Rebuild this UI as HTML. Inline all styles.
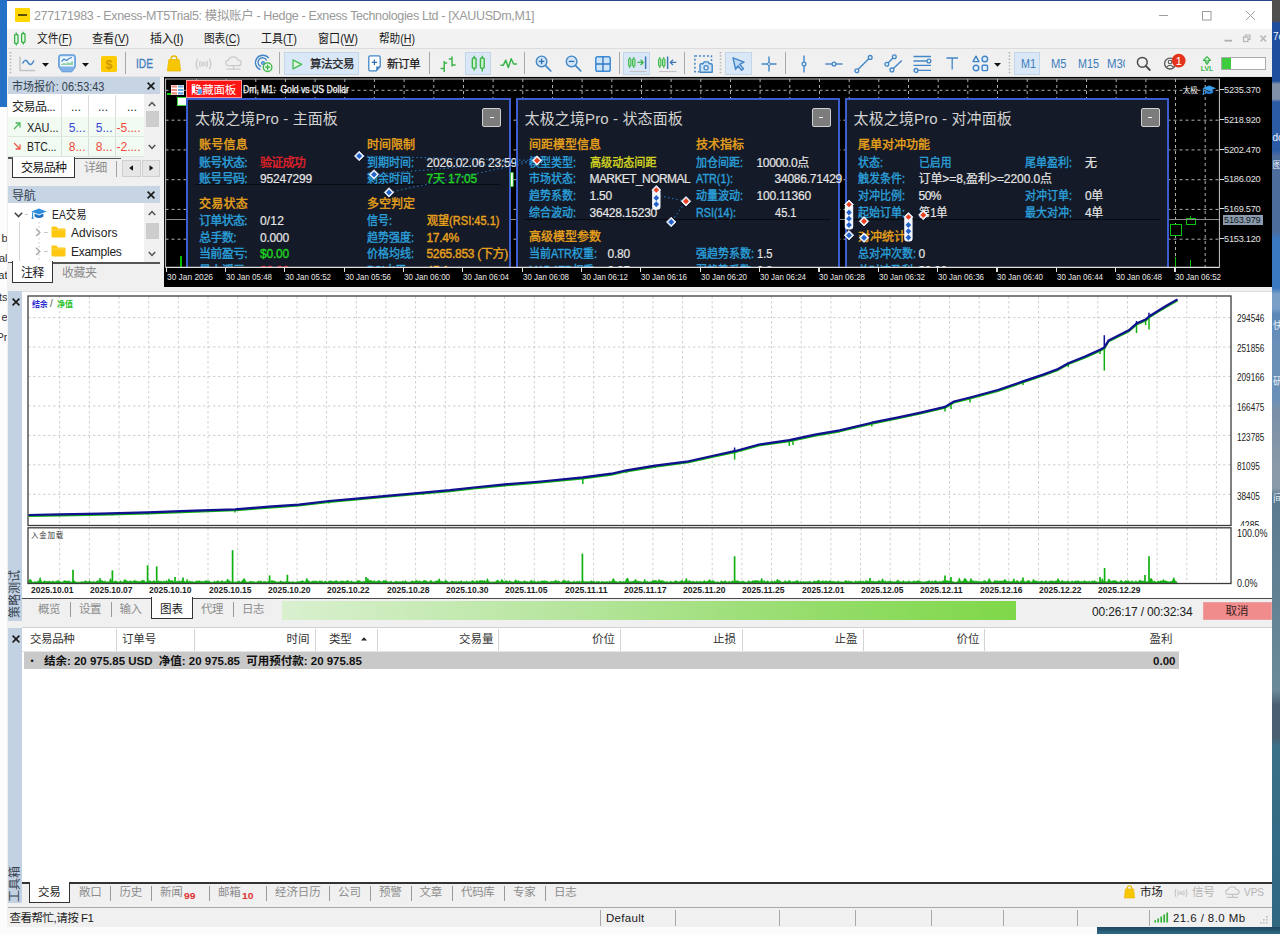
<!DOCTYPE html>
<html lang="zh-CN"><head><meta charset="utf-8"><title>MT5</title><style>
html,body{margin:0;padding:0;}
body{width:1280px;height:934px;position:relative;overflow:hidden;background:#f0f0f0;font-family:"Liberation Sans", "Noto Sans CJK SC", sans-serif;}
.a{position:absolute;}
.t{white-space:pre;}
svg{overflow:visible;display:block;}
</style></head><body>
<div class="a" style="left:0px;top:0px;width:6.7px;height:107px;background:#2470c6;"></div>
<div class="a" style="left:0px;top:107px;width:6.7px;height:827px;background:#fcfcfc;"></div>
<div class="a t" style="right:1272.5px;top:231.4px;font-size:11px;line-height:15px;color:#333;">b</div>
<div class="a t" style="right:1272.5px;top:251.4px;font-size:11px;line-height:15px;color:#333;">al</div>
<div class="a t" style="right:1272.5px;top:268.4px;font-size:11px;line-height:15px;color:#333;">at</div>
<div class="a t" style="right:1272.5px;top:290.4px;font-size:11px;line-height:15px;color:#333;">ts</div>
<div class="a t" style="right:1272.5px;top:310.4px;font-size:11px;line-height:15px;color:#333;">e</div>
<div class="a t" style="right:1272.5px;top:330.4px;font-size:11px;line-height:15px;color:#333;">Pr</div>
<div class="a" style="left:1272px;top:0px;width:8px;height:934px;background:linear-gradient(#4f4f4f 0px,#4f4f4f 21px,#1f4e9e 23px,#1f4e9e 81px,#8090a8 84px,#8090a8 99px,#2b5ba5 102px,#2b5ba5 150px,#4c6c9c 156px,#4c6c9c 232px,#3a78c0 238px,#3a78c0 288px,#7aa0c8 294px,#7aa0c8 308px,#5a88b8 314px,#6a90b8 345px,#6a90b8 398px,#7a90a8 410px,#8a9aa8 470px,#8a9aa8 488px,#5a7a90 496px,#6a8a98 690px,#4a6070 705px,#4a6070 738px,#3a7088 746px,#2f6680 934px);"></div>
<div class="a t" style="left:1273px;top:29.9px;font-size:10px;line-height:14px;color:#f0f4fa;">7c</div>
<div class="a t" style="left:1272.5px;top:130.9px;font-size:10px;line-height:14px;color:#f0f4fa;">dc</div>
<div class="a t" style="left:1272.5px;top:159.4px;font-size:9px;line-height:13px;color:#e8eef6;">图</div>
<div class="a t" style="left:1273px;top:318.9px;font-size:10px;line-height:14px;color:#e8eef6;">快</div>
<div class="a t" style="left:1273px;top:374.9px;font-size:10px;line-height:14px;color:#e8eef6;">研</div>
<div class="a t" style="left:1273px;top:491.9px;font-size:10px;line-height:14px;color:#e8eef6;">间</div>
<div class="a" style="left:0px;top:927px;width:1097px;height:7px;background:#fbfbfb;"></div>
<div class="a" style="left:1097px;top:927px;width:183px;height:7px;background:linear-gradient(#1e4660,#2f6a86);"></div>
<div class="a" style="left:6.7px;top:0px;width:1265.6px;height:1.6px;background:#274a86;"></div>
<div class="a" style="left:6.7px;top:1.4px;width:1265.6px;height:925.8px;background:#f0f0f0;"></div>
<div class="a" style="left:6.7px;top:1.4px;width:1265.6px;height:28px;background:#ffffff;"></div>
<div class="a" style="left:14.8px;top:7.5px;width:15px;height:14.8px;background:#ffd600;border-radius:1px;"></div>
<div class="a" style="left:17.8px;top:14.4px;width:9.6px;height:1.3px;background:#5e5200;"></div>
<div class="a t" style="left:34px;top:8.2px;font-size:12.5px;line-height:16.5px;color:#9a9a9a;letter-spacing:-0.36px;">277171983 - Exness-MT5Trial5: 模拟账户 - Hedge - Exness Technologies Ltd - [XAUUSDm,M1]</div>
<svg class="a" style="left:1155px;top:8px;" width="110" height="16" viewBox="0 0 110 16"><path d="M4 7.5H13" stroke="#a0a0a0" stroke-width="1"/><rect x="47.5" y="3.5" width="8.5" height="8.5" fill="none" stroke="#9a9a9a" stroke-width="1"/><path d="M91 3L100 12M100 3L91 12" stroke="#a0a0a0" stroke-width="1" fill="none"/></svg>
<div class="a" style="left:6.7px;top:29.4px;width:1265.6px;height:19.6px;background:#f2f2f2;"></div>
<div class="a" style="left:8px;top:48px;width:1264px;height:1px;background:#dcdcdc;"></div>
<svg class="a" style="left:13px;top:31px;" width="14" height="16" viewBox="0 0 14 16"><g fill="#e6f7e6" stroke="#37b24a" stroke-width="1.3"><rect x="1.6" y="3.5" width="3.4" height="9" rx="1"/><rect x="8.6" y="2.5" width="3.4" height="9" rx="1"/></g><path d="M3.3 1.5V3.5M3.3 12.5V14.5M10.3 0.8V2.5M10.3 11.5V13.5" stroke="#37b24a" stroke-width="1.2"/></svg>
<div class="a t" style="left:37px;top:31.4px;font-size:12px;line-height:16px;color:#1a1a1a;transform:scaleX(0.890);transform-origin:left center;">文件(F)</div>
<div class="a" style="left:60.8px;top:45px;width:7px;height:1px;background:#444;"></div>
<div class="a t" style="left:92px;top:31.4px;font-size:12px;line-height:16px;color:#1a1a1a;transform:scaleX(0.925);transform-origin:left center;">查看(V)</div>
<div class="a" style="left:116.3px;top:45px;width:8.5px;height:1px;background:#444;"></div>
<div class="a t" style="left:150px;top:31.4px;font-size:12px;line-height:16px;color:#1a1a1a;letter-spacing:-0.47px;">插入(I)</div>
<div class="a" style="left:175.8px;top:45px;width:3px;height:1px;background:#444;"></div>
<div class="a t" style="left:204px;top:31.4px;font-size:12px;line-height:16px;color:#1a1a1a;transform:scaleX(0.885);transform-origin:left center;">图表(C)</div>
<div class="a" style="left:227.3px;top:45px;width:8.5px;height:1px;background:#444;"></div>
<div class="a t" style="left:261px;top:31.4px;font-size:12px;line-height:16px;color:#1a1a1a;transform:scaleX(0.915);transform-origin:left center;">工具(T)</div>
<div class="a" style="left:285.8px;top:45px;width:7px;height:1px;background:#444;"></div>
<div class="a t" style="left:318px;top:31.4px;font-size:12px;line-height:16px;color:#1a1a1a;transform:scaleX(0.923);transform-origin:left center;">窗口(W)</div>
<div class="a" style="left:345.3px;top:45px;width:8.5px;height:1px;background:#444;"></div>
<div class="a t" style="left:379px;top:31.4px;font-size:12px;line-height:16px;color:#1a1a1a;transform:scaleX(0.885);transform-origin:left center;">帮助(H)</div>
<div class="a" style="left:402.3px;top:45px;width:8.5px;height:1px;background:#444;"></div>
<svg class="a" style="left:1220px;top:32px;" width="50" height="14" viewBox="0 0 50 14"><path d="M4.5 8.7H12" stroke="#b0b0b0" stroke-width="1.8"/><g fill="none" stroke="#b4b4b4" stroke-width="1.2"><rect x="23.5" y="5" width="4.5" height="4.5"/><path d="M25.5 5V3H30V7.5H28"/></g><path d="M40.5 3.5L46 9.5M46 3.5L40.5 9.5" stroke="#b8b8b8" stroke-width="1.6"/></svg>
<div class="a" style="left:8px;top:49px;width:1264px;height:28px;background:#f0f0f0;"></div>
<div class="a" style="left:8px;top:76px;width:1264px;height:1px;background:#e2e2e2;"></div>
<svg class="a" style="left:9px;top:51px;" width="3" height="24" viewBox="0 0 3 24"><path d="M1.5 1V24" stroke="#b4b4b4" stroke-width="1.6" stroke-dasharray="1.4 1.9"/></svg>
<svg class="a" style="left:19px;top:56px;" width="17" height="16" viewBox="0 0 17 16"><path d="M1 0.5V14.5H16" fill="none" stroke="#c2c2c2" stroke-width="1.4"/><path d="M3.5 7.5C5.5 3.5 7 3.5 9 6.5S12.5 9.5 15 4.5" fill="none" stroke="#4286c6" stroke-width="1.5"/></svg>
<svg class="a" style="left:41.5px;top:63px;" width="7" height="4" viewBox="0 0 7 4"><path d="M0 0H7L3.5 3.8Z" fill="#111"/></svg>
<svg class="a" style="left:58px;top:54px;" width="18" height="19" viewBox="0 0 18 19"><path d="M2.5 0.8H15.5Q17.3 0.8 17.3 2.6V13L13.8 17.8H4.2L0.7 13V2.6Q0.7 0.8 2.5 0.8Z" fill="#7fb2e6" stroke="#5c98d6" stroke-width="1"/><rect x="2" y="2.2" width="14" height="10.2" rx="1" fill="#eef7ff"/><path d="M3.5 7.5L6 5L8.5 6.5L11 4.5L14 3.5" fill="none" stroke="#4286c6" stroke-width="1.1"/><path d="M4 11V9.8M6 11V9M8 11V9.5M10 11V8.5M12 11V9M14 11V7.5" stroke="#45b455" stroke-width="1.1"/></svg>
<svg class="a" style="left:81.5px;top:63px;" width="7" height="4" viewBox="0 0 7 4"><path d="M0 0H7L3.5 3.8Z" fill="#111"/></svg>
<svg class="a" style="left:101px;top:55.5px;" width="16" height="16" viewBox="0 0 16 16"><rect x="0" y="0" width="16" height="16" rx="1.8" fill="#ffcb05"/><text x="8" y="12.6" text-anchor="middle" font-size="12.5" font-weight="700" fill="#cf9800" font-family='"Liberation Sans",sans-serif'>$</text></svg>
<div class="a" style="left:125px;top:52px;width:1px;height:22px;background:#a8a8a8;"></div>
<div class="a t" style="left:135.5px;top:56.2px;font-size:12.5px;line-height:16.5px;color:#3f7fc0;-webkit-text-stroke:0.3px #3f7fc0;transform:scaleX(0.816);transform-origin:left center;">IDE</div>
<svg class="a" style="left:167px;top:55px;" width="14" height="17" viewBox="0 0 14 17"><path d="M4.2 5V3.2Q4.2 1 7 1T9.8 3.2V5" fill="none" stroke="#e8b800" stroke-width="1.3"/><path d="M1.8 4.6H12.2L13.6 16H0.4Z" fill="#f7c600" stroke="#eab900" stroke-width="0.8" stroke-linejoin="round"/></svg>
<svg class="a" style="left:195px;top:57.5px;" width="17" height="12" viewBox="0 0 17 12"><g fill="none" stroke="#cacaca" stroke-width="1.3"><circle cx="8.5" cy="6" r="1.7"/><path d="M5.3 2.8Q3.8 6 5.3 9.2M11.7 2.8Q13.2 6 11.7 9.2M2.6 0.8Q-0.2 6 2.6 11.2M14.4 0.8Q17.2 6 14.4 11.2"/></g></svg>
<svg class="a" style="left:224.5px;top:56px;" width="17" height="15" viewBox="0 0 17 15"><g fill="none" stroke="#cacaca" stroke-width="1.3"><path d="M4.2 9.6Q0.8 9.6 0.8 6.8Q0.8 4.3 3.6 4.1Q4.5 0.8 8.3 0.8Q11.8 0.8 12.7 3.9Q16.2 4 16.2 6.9Q16.2 9.6 13 9.6Z"/><path d="M8.5 9.6V13M1.5 13.2H15.5"/></g></svg>
<svg class="a" style="left:254.5px;top:55px;" width="18" height="17" viewBox="0 0 18 17"><g fill="none" stroke="#4286c6" stroke-width="1.35"><path d="M13.8 3.2A7.4 7.4 0 1 0 5.4 14.6"/><path d="M11.7 5.6A4.5 4.5 0 1 0 6.2 11.6"/></g><circle cx="8" cy="8" r="1.7" fill="#6aa8e0" stroke="#4286c6" stroke-width="0.8"/><circle cx="12.6" cy="12.2" r="4.3" fill="#dff5df" stroke="#3cb44a" stroke-width="1.3"/><path d="M12.6 9.7V14.7M10.1 12.2H15.1" stroke="#3cb44a" stroke-width="1.3"/></svg>
<div class="a" style="left:279px;top:52px;width:1px;height:22px;background:#a8a8a8;"></div>
<div class="a" style="left:283.5px;top:51.5px;width:75.5px;height:23.5px;background:#d9e7f6;box-shadow:inset 0 0 0 1px #c3d5e8;"></div>
<svg class="a" style="left:291.5px;top:58.5px;" width="11" height="11" viewBox="0 0 11 11"><path d="M1 0.8L9.6 5.3L1 9.8Z" fill="#dff7df" stroke="#45bd52" stroke-width="1.3" stroke-linejoin="round"/></svg>
<div class="a t" style="left:310px;top:56.8px;font-size:11.5px;line-height:15.5px;color:#1a1a1a;-webkit-text-stroke:0.25px #1a1a1a;letter-spacing:-0.50px;">算法交易</div>
<svg class="a" style="left:368px;top:55px;" width="13" height="17" viewBox="0 0 13 17"><path d="M2.3 0.8H10.7Q12.2 0.8 12.2 2.3V11.5L8.2 15.8H2.3Q0.8 15.8 0.8 14.3V2.3Q0.8 0.8 2.3 0.8Z" fill="#fff" stroke="#4286c6" stroke-width="1.3"/><path d="M12.2 11.5H8.2V15.8Z" fill="#4286c6"/><path d="M6.4 4.6V10M3.7 7.3H9.1" stroke="#2c6cb0" stroke-width="1.2"/></svg>
<div class="a t" style="left:387px;top:56.8px;font-size:11.5px;line-height:15.5px;color:#1a1a1a;-webkit-text-stroke:0.25px #1a1a1a;letter-spacing:-0.50px;">新订单</div>
<div class="a" style="left:429px;top:52px;width:1px;height:22px;background:#a8a8a8;"></div>
<svg class="a" style="left:440px;top:55.5px;" width="17" height="16" viewBox="0 0 17 16"><path d="M4.2 5V16M0.6 12.5H4.2M4.2 7H7.2M12 0.5V10.5M8.8 3H12M12 9H15.6" fill="none" stroke="#3cb44a" stroke-width="1.5"/></svg>
<div class="a" style="left:464.5px;top:51.5px;width:26.0px;height:23.5px;background:#d9e7f6;box-shadow:inset 0 0 0 1px #c3d5e8;"></div>
<svg class="a" style="left:471px;top:55px;" width="15" height="17" viewBox="0 0 15 17"><g fill="#c9f2c9" stroke="#3cb44a" stroke-width="1.4"><rect x="1.3" y="3" width="3.8" height="10.2" rx="1.3"/><rect x="9.4" y="3" width="3.8" height="10.2" rx="1.3"/></g><path d="M3.2 0.8V3M3.2 13.2V15.6M11.3 0.8V3M11.3 13.2V16.4" stroke="#3cb44a" stroke-width="1.4"/></svg>
<svg class="a" style="left:499.5px;top:58px;" width="18" height="12" viewBox="0 0 18 12"><path d="M0.5 7.2H3.3L5.8 2.2L8.3 9.6L11.2 0.8L13.6 6H17" fill="none" stroke="#3cb44a" stroke-width="1.5" stroke-linejoin="round"/></svg>
<div class="a" style="left:524px;top:52px;width:1px;height:22px;background:#a8a8a8;"></div>
<svg class="a" style="left:534.7px;top:54.7px;" width="17" height="17" viewBox="0 0 17 17"><circle cx="6.6" cy="6.4" r="5.3" fill="#d2e5f7" stroke="#4286c6" stroke-width="1.4"/><path d="M10.6 10.6L15.8 16" stroke="#4286c6" stroke-width="1.7" stroke-linecap="round"/><path d="M3.8 6.4H9.4" stroke="#2c6cb0" stroke-width="1.3"/><path d="M6.6 3.6V9.2" stroke="#2c6cb0" stroke-width="1.3"/></svg>
<svg class="a" style="left:564.7px;top:54.7px;" width="17" height="17" viewBox="0 0 17 17"><circle cx="6.6" cy="6.4" r="5.3" fill="#d2e5f7" stroke="#4286c6" stroke-width="1.4"/><path d="M10.6 10.6L15.8 16" stroke="#4286c6" stroke-width="1.7" stroke-linecap="round"/><path d="M3.8 6.4H9.4" stroke="#2c6cb0" stroke-width="1.3"/></svg>
<svg class="a" style="left:594.5px;top:55.5px;" width="16" height="16" viewBox="0 0 16 16"><rect x="0.8" y="0.8" width="14.4" height="14.4" rx="1.8" fill="#cfe4f8" stroke="#3b8ad6" stroke-width="1.5"/><path d="M8 1V15M1 8H15" stroke="#2f78c4" stroke-width="1.4"/></svg>
<div class="a" style="left:619px;top:52px;width:1px;height:22px;background:#a8a8a8;"></div>
<div class="a" style="left:623px;top:51.5px;width:27px;height:23.5px;background:#d9e7f6;box-shadow:inset 0 0 0 1px #c3d5e8;"></div>
<svg class="a" style="left:628px;top:55.5px;" width="20" height="17" viewBox="0 0 20 17"><g fill="#bff0bf" stroke="#3cb44a" stroke-width="1.1"><rect x="0.6" y="2.8" width="2.3" height="7.2" rx="1"/><rect x="4.6" y="2.8" width="2.3" height="7.2" rx="1"/></g><path d="M1.75 1V2.8M1.75 10V12M5.75 1V2.8M5.75 10V12" stroke="#3cb44a" stroke-width="1.1"/><path d="M9.4 6.4H15M12.6 3.8L15.2 6.4L12.6 9" fill="none" stroke="#3cb44a" stroke-width="1.3"/><path d="M17.6 0.5V13" stroke="#3f78b4" stroke-width="1.5"/><path d="M1.5 15.6H18.5" stroke="#bdbdbd" stroke-width="1"/></svg>
<svg class="a" style="left:657.5px;top:55.5px;" width="20" height="17" viewBox="0 0 20 17"><g fill="#bff0bf" stroke="#3cb44a" stroke-width="1.1"><rect x="0.6" y="2.8" width="2.3" height="7.2" rx="1"/><rect x="4.6" y="2.8" width="2.3" height="7.2" rx="1"/></g><path d="M1.75 1V2.8M1.75 10V12M5.75 1V2.8M5.75 10V12" stroke="#3cb44a" stroke-width="1.1"/><path d="M9.6 0.5V13" stroke="#3f78b4" stroke-width="1.5"/><path d="M12.6 6.4H18.4M15 3.8L12.4 6.4L15 9" fill="none" stroke="#3f78b4" stroke-width="1.3"/><path d="M1 15.6H18.5" stroke="#bdbdbd" stroke-width="1"/></svg>
<div class="a" style="left:683.5px;top:52px;width:1px;height:22px;background:#a8a8a8;"></div>
<svg class="a" style="left:693.5px;top:54.5px;" width="19" height="18" viewBox="0 0 19 18"><rect x="0.9" y="0.9" width="16.6" height="15.8" fill="none" stroke="#4286c6" stroke-width="1.5" stroke-dasharray="2 2"/><rect x="5" y="6" width="14" height="12" fill="#f0f0f0"/><path d="M6 17.2V10Q6 8.8 7.2 8.8H9L10.2 6.9H14.2L15.4 8.8H17Q18.2 8.8 18.2 10V17.2Z" fill="#cfe4f8" stroke="#4286c6" stroke-width="1.4" stroke-linejoin="round"/><circle cx="12.1" cy="12.8" r="2.1" fill="#f0f0f0" stroke="#4286c6" stroke-width="1.2"/></svg>
<svg class="a" style="left:719px;top:51px;" width="3" height="24" viewBox="0 0 3 24"><path d="M1.5 1V24" stroke="#b4b4b4" stroke-width="1.6" stroke-dasharray="1.4 1.9"/></svg>
<div class="a" style="left:724.5px;top:51.5px;width:27.0px;height:23.5px;background:#d9e7f6;box-shadow:inset 0 0 0 1px #c3d5e8;"></div>
<svg class="a" style="left:732px;top:57px;" width="14" height="14" viewBox="0 0 14 14"><path d="M1 0.9L12 5.2L7.6 7.3L11.5 11.6L9.6 13.2L5.9 8.9L3.6 12.4Z" fill="#bcd9f5" stroke="#4286c6" stroke-width="1.4" stroke-linejoin="round"/></svg>
<svg class="a" style="left:760.5px;top:55.5px;" width="16" height="16" viewBox="0 0 16 16"><path d="M8 0.5V15.5M0.5 8H15.5" stroke="#4286c6" stroke-width="1.4"/><circle cx="8" cy="8" r="1.5" fill="#f0f0f0" stroke="#4286c6" stroke-width="1"/></svg>
<div class="a" style="left:785px;top:52px;width:1px;height:22px;background:#a8a8a8;"></div>
<svg class="a" style="left:799.5px;top:54.5px;" width="8" height="18" viewBox="0 0 8 18"><path d="M4 0.5V17.5" stroke="#4286c6" stroke-width="1.4"/><circle cx="4" cy="9" r="1.9" fill="#e4f0fb" stroke="#4286c6" stroke-width="1.3"/></svg>
<svg class="a" style="left:824.5px;top:59.5px;" width="18" height="8" viewBox="0 0 18 8"><path d="M0.3 4H17.6" stroke="#4286c6" stroke-width="1.4"/><circle cx="9" cy="4" r="1.9" fill="#e4f0fb" stroke="#4286c6" stroke-width="1.3"/></svg>
<svg class="a" style="left:853.5px;top:54.5px;" width="19" height="18" viewBox="0 0 19 18"><path d="M3 15.6L16 2.6" stroke="#4286c6" stroke-width="1.4"/><circle cx="2.8" cy="15.7" r="1.9" fill="#e4f0fb" stroke="#4286c6" stroke-width="1.3"/><circle cx="16.2" cy="2.4" r="1.9" fill="#e4f0fb" stroke="#4286c6" stroke-width="1.3"/></svg>
<svg class="a" style="left:883.5px;top:54px;" width="19" height="19" viewBox="0 0 19 19"><path d="M2.8 10.2L10.2 2.8M7.8 16L17.8 6.4" stroke="#4286c6" stroke-width="1.4"/><g fill="#e4f0fb" stroke="#4286c6" stroke-width="1.3"><circle cx="2.8" cy="10.2" r="1.9"/><circle cx="10.3" cy="2.7" r="1.9"/><circle cx="7.9" cy="15.9" r="1.9"/></g></svg>
<svg class="a" style="left:913px;top:54.5px;" width="19" height="18" viewBox="0 0 19 18"><path d="M0.5 1.5H18M0.5 6H14M0.5 10.4H18M5 15.4H18" stroke="#4286c6" stroke-width="1.4"/><g fill="#e4f0fb" stroke="#4286c6" stroke-width="1.3"><circle cx="15.9" cy="6" r="1.9"/><circle cx="3" cy="15.4" r="1.9"/></g></svg>
<svg class="a" style="left:946px;top:57px;" width="13" height="13" viewBox="0 0 13 13"><path d="M0.5 1H12M6.2 1V12.4" stroke="#4286c6" stroke-width="1.3" fill="none"/></svg>
<svg class="a" style="left:972px;top:55px;" width="17" height="17" viewBox="0 0 17 17"><g fill="#e4f0fb" stroke="#4286c6" stroke-width="1.4"><path d="M4 1.2L7 6.6H1Z" stroke-linejoin="round"/><circle cx="12.8" cy="4" r="2.8"/><circle cx="4" cy="13" r="2.8"/><rect x="10.2" y="10.3" width="5.3" height="5.3" rx="0.8"/></g></svg>
<svg class="a" style="left:994px;top:63px;" width="7" height="4" viewBox="0 0 7 4"><path d="M0 0H7L3.5 3.8Z" fill="#111"/></svg>
<svg class="a" style="left:1008px;top:51px;" width="3" height="24" viewBox="0 0 3 24"><path d="M1.5 1V24" stroke="#b4b4b4" stroke-width="1.6" stroke-dasharray="1.4 1.9"/></svg>
<div class="a" style="left:1014px;top:51.5px;width:26px;height:23.5px;background:#d9e7f6;box-shadow:inset 0 0 0 1px #c3d5e8;"></div>
<div class="a t" style="left:1020.5px;top:56.2px;font-size:12.5px;line-height:16.5px;color:#3a7cbc;transform:scaleX(0.863);transform-origin:left center;">M1</div>
<div class="a t" style="left:1050.5px;top:56.2px;font-size:12.5px;line-height:16.5px;color:#3a7cbc;transform:scaleX(0.892);transform-origin:left center;">M5</div>
<div class="a t" style="left:1077.5px;top:56.2px;font-size:12.5px;line-height:16.5px;color:#3a7cbc;transform:scaleX(0.863);transform-origin:left center;">M15</div>
<div class="a" style="left:1106px;top:55px;width:18.8px;height:18px;overflow:hidden;">
<div class="a t" style="left:0.8px;top:1.2px;font-size:12.5px;line-height:16.5px;color:#3a7cbc;transform:scaleX(0.913);transform-origin:left center;">M30</div>
</div>
<svg class="a" style="left:1135.5px;top:56px;" width="15" height="15" viewBox="0 0 15 15"><circle cx="6.3" cy="6.3" r="4.9" fill="none" stroke="#4a4a4a" stroke-width="1.5"/><path d="M9.9 10L13.8 14" stroke="#4a4a4a" stroke-width="1.8" stroke-linecap="round"/></svg>
<svg class="a" style="left:1163px;top:53px;" width="24" height="18" viewBox="0 0 24 18"><circle cx="7" cy="10.6" r="5.4" fill="none" stroke="#555" stroke-width="1.3"/><circle cx="7" cy="9" r="1.8" fill="none" stroke="#555" stroke-width="1.1"/><path d="M3.6 14.2Q7 10.4 10.4 14.2" fill="none" stroke="#555" stroke-width="1.1"/><circle cx="15.7" cy="7.6" r="6.9" fill="#e5341d"/><text x="15.7" y="11.6" text-anchor="middle" font-size="11" fill="#fff" font-family='"Liberation Sans",sans-serif'>1</text></svg>
<svg class="a" style="left:1199.5px;top:55.5px;" width="14" height="16" viewBox="0 0 14 16"><path d="M7 0.6L10.6 4.4H8.4Q9.4 6.8 7 7.6Q4.6 6.8 5.6 4.4H3.4Z" fill="#d8f3d8" stroke="#3cb44a" stroke-width="1.1" stroke-linejoin="round"/><path d="M7 4V9" stroke="#3cb44a" stroke-width="1.1"/><text x="7" y="15.2" text-anchor="middle" font-size="6.8" font-weight="700" fill="#3cb44a" font-family='"Liberation Sans",sans-serif'>LVL</text></svg>
<div class="a" style="left:1220.5px;top:57.3px;width:45.5px;height:13.2px;background:#ffffff;box-sizing:border-box;border:1.5px solid #ababab;"></div>
<div class="a" style="left:1221.6px;top:58.4px;width:9.2px;height:11px;background:#3ccc3c;"></div>
<div class="a" style="left:8px;top:77px;width:152px;height:16.5px;background:#c6d4e4;"></div>
<div class="a t" style="left:12px;top:78.5px;font-size:12px;line-height:16px;color:#33414f;transform:scaleX(0.912);transform-origin:left center;">市场报价: 06:53:43</div>
<svg class="a" style="left:147px;top:81.8px;" width="8" height="8" viewBox="0 0 8 8"><path d="M0.6 0.6L7.4 7.4M7.4 0.6L0.6 7.4" stroke="#1a1a1a" stroke-width="1.6"/></svg>
<div class="a" style="left:8px;top:94px;width:136px;height:62px;background:#ffffff;"></div>
<div class="a" style="left:8px;top:116.5px;width:136px;height:39.5px;background:#f1fbf1;"></div>
<div class="a" style="left:61px;top:95px;width:1px;height:61px;background:#dcdcdc;"></div>
<div class="a" style="left:88.3px;top:95px;width:1px;height:61px;background:#dcdcdc;"></div>
<div class="a" style="left:115.2px;top:95px;width:1px;height:61px;background:#dcdcdc;"></div>
<div class="a" style="left:8px;top:136px;width:136px;height:1px;background:#dfe6df;"></div>
<div class="a" style="left:8px;top:155.6px;width:136px;height:1px;background:#dfe6df;"></div>
<div class="a t" style="left:12px;top:99.4px;font-size:12px;line-height:16px;color:#222;letter-spacing:-0.50px;">交易品...</div>
<div class="a t" style="right:1199px;top:99.4px;font-size:12px;line-height:16px;color:#333;">...</div>
<div class="a t" style="right:1172px;top:99.4px;font-size:12px;line-height:16px;color:#333;">...</div>
<div class="a t" style="right:1143px;top:99.4px;font-size:12px;line-height:16px;color:#333;">...</div>
<svg class="a" style="left:12.5px;top:122px;" width="8" height="8" viewBox="0 0 8 8"><path d="M1 7L7 1M2.6 1H7V5.4" fill="none" stroke="#4cb85c" stroke-width="1.3"/></svg>
<svg class="a" style="left:12.5px;top:141.5px;" width="8" height="8" viewBox="0 0 8 8"><path d="M1 1L7 7M2.6 7H7V2.6" fill="none" stroke="#ee5a4a" stroke-width="1.3"/></svg>
<div class="a t" style="left:27px;top:119.7px;font-size:12px;line-height:16px;color:#222;transform:scaleX(0.908);transform-origin:left center;">XAU...</div>
<div class="a t" style="left:27px;top:139.2px;font-size:12px;line-height:16px;color:#222;transform:scaleX(0.867);transform-origin:left center;">BTC...</div>
<div class="a t" style="right:1194.5px;top:119.7px;font-size:12px;line-height:16px;color:#3848d8;">5...</div>
<div class="a t" style="right:1167.5px;top:119.7px;font-size:12px;line-height:16px;color:#3848d8;">5...</div>
<div class="a t" style="right:1139.5px;top:119.7px;font-size:12px;line-height:16px;color:#f0483c;">-5....</div>
<div class="a t" style="right:1194.5px;top:139.2px;font-size:12px;line-height:16px;color:#f0483c;">8...</div>
<div class="a t" style="right:1167.5px;top:139.2px;font-size:12px;line-height:16px;color:#f0483c;">8...</div>
<div class="a t" style="right:1139.5px;top:139.2px;font-size:12px;line-height:16px;color:#f0483c;">-2....</div>
<div class="a" style="left:144px;top:94px;width:16px;height:62px;background:#f0f0f0;"></div>
<svg class="a" style="left:148px;top:100.5px;" width="8" height="6" viewBox="0 0 8 6"><path d="M0.8 5L4 1.6L7.2 5" fill="none" stroke="#505050" stroke-width="1.5"/></svg>
<svg class="a" style="left:148px;top:144px;" width="8" height="6" viewBox="0 0 8 6"><path d="M0.8 1L4 4.4L7.2 1" fill="none" stroke="#505050" stroke-width="1.5"/></svg>
<div class="a" style="left:146px;top:111px;width:13px;height:15.5px;background:#cdcdcd;"></div>
<div class="a" style="left:74.5px;top:158px;width:46.5px;height:1.4px;background:#555;"></div>
<div class="a" style="left:12px;top:156.5px;width:62.5px;height:21px;background:#ffffff;box-sizing:border-box;border-left:1.4px solid #333;border-right:1.8px solid #333;border-bottom:1.8px solid #333;"></div>
<div class="a t" style="left:21px;top:159.6px;font-size:12px;line-height:16px;color:#1a1a1a;letter-spacing:-0.63px;">交易品种</div>
<div class="a t" style="left:84px;top:159.6px;font-size:12px;line-height:16px;color:#8c8c8c;letter-spacing:-0.76px;">详细</div>
<div class="a" style="left:8px;top:157.3px;width:5px;height:1.4px;background:#555;"></div>
<div class="a" style="left:116px;top:161px;width:1px;height:16px;background:#a0a0a0;"></div>
<div class="a" style="left:122px;top:159.5px;width:18.5px;height:17.5px;background:#e6e6e6;box-sizing:border-box;border:1px solid #cfcfcf;"></div>
<svg class="a" style="left:127.2px;top:164.3px;" width="8" height="8" viewBox="0 0 8 8"><path d="M6 1.2L2.2 4L6 6.8Z" fill="#111"/></svg>
<div class="a" style="left:141.5px;top:159.5px;width:18.5px;height:17.5px;background:#e6e6e6;box-sizing:border-box;border:1px solid #cfcfcf;"></div>
<svg class="a" style="left:146.7px;top:164.3px;" width="8" height="8" viewBox="0 0 8 8"><path d="M2.5 1.2L6.3 4L2.5 6.8Z" fill="#111"/></svg>
<div class="a" style="left:8px;top:186.3px;width:152px;height:16.5px;background:#c6d4e4;"></div>
<div class="a t" style="left:12px;top:187.7px;font-size:12px;line-height:16px;color:#33414f;letter-spacing:-0.26px;">导航</div>
<svg class="a" style="left:147px;top:191px;" width="8" height="8" viewBox="0 0 8 8"><path d="M0.6 0.6L7.4 7.4M7.4 0.6L0.6 7.4" stroke="#1a1a1a" stroke-width="1.6"/></svg>
<div class="a" style="left:8px;top:203px;width:136px;height:59.5px;background:#ffffff;"></div>
<div class="a" style="left:144px;top:203px;width:16px;height:59.5px;background:#f0f0f0;"></div>
<svg class="a" style="left:148px;top:209.5px;" width="8" height="6" viewBox="0 0 8 6"><path d="M0.8 5L4 1.6L7.2 5" fill="none" stroke="#505050" stroke-width="1.5"/></svg>
<svg class="a" style="left:148px;top:250.5px;" width="8" height="6" viewBox="0 0 8 6"><path d="M0.8 1L4 4.4L7.2 1" fill="none" stroke="#505050" stroke-width="1.5"/></svg>
<div class="a" style="left:146px;top:223px;width:13px;height:15.5px;background:#cdcdcd;"></div>
<div class="a" style="left:18.5px;top:222px;width:1px;height:40px;background:#d4d4d4;"></div>
<svg class="a" style="left:38px;top:222px;" width="2" height="40" viewBox="0 0 2 40"><path d="M1 0V40" stroke="#c8c8c8" stroke-width="1" stroke-dasharray="1.5 2.5"/></svg>
<svg class="a" style="left:14px;top:211.5px;" width="9" height="6" viewBox="0 0 9 6"><path d="M0.8 0.8L4.5 4.6L8.2 0.8" fill="none" stroke="#444" stroke-width="1.5"/></svg>
<div class="a" style="left:24.5px;top:213.5px;width:3px;height:1px;background:#c8c8c8;"></div>
<svg class="a" style="left:31px;top:208px;" width="16.0" height="12.0" viewBox="0 0 16 12"><path d="M8 0.6L15.6 3.6L8 6.6L0.4 3.6Z" fill="#2e8fdc"/><path d="M3.6 5.6V8.6Q8 11.6 12.4 8.6V5.6L8 7.4Z" fill="#1d6fc0"/><path d="M1.6 4.2V9.4" stroke="#2e8fdc" stroke-width="1.1"/><circle cx="1.6" cy="10" r="1.1" fill="#2e8fdc"/></svg>
<div class="a t" style="left:52px;top:206.7px;font-size:12px;line-height:16px;color:#222;transform:scaleX(0.862);transform-origin:left center;">EA交易</div>
<svg class="a" style="left:34.5px;top:228.3px;" width="6" height="9" viewBox="0 0 6 9"><path d="M1 0.8L4.8 4.4L1 8" fill="none" stroke="#a8a8a8" stroke-width="1.4"/></svg>
<div class="a" style="left:44px;top:232.0px;width:3.5px;height:1px;background:#c8c8c8;"></div>
<svg class="a" style="left:51px;top:226.3px;" width="15" height="12" viewBox="0 0 15 12"><path d="M0.5 1.6Q0.5 0.6 1.5 0.6H5.4L7 2.4H13.5Q14.5 2.4 14.5 3.4V10.6Q14.5 11.6 13.5 11.6H1.5Q0.5 11.6 0.5 10.6Z" fill="#ffc810"/><path d="M0.5 3.6H14.5V4.4H0.5Z" fill="#ffdb5c"/></svg>
<div class="a t" style="left:71px;top:225.4px;font-size:12px;line-height:16px;color:#222;letter-spacing:0.06px;">Advisors</div>
<svg class="a" style="left:34.5px;top:246.8px;" width="6" height="9" viewBox="0 0 6 9"><path d="M1 0.8L4.8 4.4L1 8" fill="none" stroke="#a8a8a8" stroke-width="1.4"/></svg>
<div class="a" style="left:44px;top:250.5px;width:3.5px;height:1px;background:#c8c8c8;"></div>
<svg class="a" style="left:51px;top:244.8px;" width="15" height="12" viewBox="0 0 15 12"><path d="M0.5 1.6Q0.5 0.6 1.5 0.6H5.4L7 2.4H13.5Q14.5 2.4 14.5 3.4V10.6Q14.5 11.6 13.5 11.6H1.5Q0.5 11.6 0.5 10.6Z" fill="#ffc810"/><path d="M0.5 3.6H14.5V4.4H0.5Z" fill="#ffdb5c"/></svg>
<div class="a t" style="left:71px;top:243.9px;font-size:12px;line-height:16px;color:#222;letter-spacing:-0.27px;">Examples</div>
<div class="a" style="left:52.5px;top:262.3px;width:107.5px;height:1.4px;background:#555;"></div>
<div class="a" style="left:8px;top:261.8px;width:5px;height:1.4px;background:#555;"></div>
<div class="a" style="left:12px;top:261px;width:40.8px;height:21.5px;background:#ffffff;box-sizing:border-box;border-left:1.4px solid #333;border-right:1.8px solid #333;border-bottom:1.8px solid #333;"></div>
<div class="a t" style="left:21px;top:264.9px;font-size:12px;line-height:16px;color:#1a1a1a;letter-spacing:-0.76px;">注释</div>
<div class="a t" style="left:62px;top:264.9px;font-size:12px;line-height:16px;color:#8c8c8c;letter-spacing:-0.51px;">收藏夹</div>
<div class="a" style="left:164px;top:77px;width:1108px;height:210px;background:#000;overflow:hidden;">
<div class="a" style="left:-164px;top:-77px;width:1280px;height:934px;">
<svg class="a" style="left:0px;top:0px;" width="1280" height="300" viewBox="0 0 1280 300"><path d="M165.5 90.3H1219.5" stroke="#b0b0b0" stroke-width="1" stroke-dasharray="3 3"/><path d="M165.5 120.2H1219.5" stroke="#b0b0b0" stroke-width="1" stroke-dasharray="3 3"/><path d="M165.5 149.9H1219.5" stroke="#b0b0b0" stroke-width="1" stroke-dasharray="3 3"/><path d="M165.5 179.7H1219.5" stroke="#b0b0b0" stroke-width="1" stroke-dasharray="3 3"/><path d="M165.5 209.4H1219.5" stroke="#b0b0b0" stroke-width="1" stroke-dasharray="3 3"/><path d="M165.5 239.2H1219.5" stroke="#b0b0b0" stroke-width="1" stroke-dasharray="3 3"/><path d="M1205.2 79V267.5" stroke="#b0b0b0" stroke-width="1" stroke-dasharray="3 3"/><path d="M1175.5 79V267.5" stroke="#b0b0b0" stroke-width="1" stroke-dasharray="3 3"/><path d="M1145.9 79V267.5" stroke="#b0b0b0" stroke-width="1" stroke-dasharray="3 3"/><path d="M1116.2 79V267.5" stroke="#b0b0b0" stroke-width="1" stroke-dasharray="3 3"/><path d="M1086.5 79V267.5" stroke="#b0b0b0" stroke-width="1" stroke-dasharray="3 3"/><path d="M1056.8 79V267.5" stroke="#b0b0b0" stroke-width="1" stroke-dasharray="3 3"/><path d="M1027.2 79V267.5" stroke="#b0b0b0" stroke-width="1" stroke-dasharray="3 3"/><path d="M997.5 79V267.5" stroke="#b0b0b0" stroke-width="1" stroke-dasharray="3 3"/><path d="M967.8 79V267.5" stroke="#b0b0b0" stroke-width="1" stroke-dasharray="3 3"/><path d="M938.2 79V267.5" stroke="#b0b0b0" stroke-width="1" stroke-dasharray="3 3"/><path d="M908.5 79V267.5" stroke="#b0b0b0" stroke-width="1" stroke-dasharray="3 3"/><path d="M878.8 79V267.5" stroke="#b0b0b0" stroke-width="1" stroke-dasharray="3 3"/><path d="M849.2 79V267.5" stroke="#b0b0b0" stroke-width="1" stroke-dasharray="3 3"/><path d="M819.5 79V267.5" stroke="#b0b0b0" stroke-width="1" stroke-dasharray="3 3"/><path d="M789.8 79V267.5" stroke="#b0b0b0" stroke-width="1" stroke-dasharray="3 3"/><path d="M760.1 79V267.5" stroke="#b0b0b0" stroke-width="1" stroke-dasharray="3 3"/><path d="M730.5 79V267.5" stroke="#b0b0b0" stroke-width="1" stroke-dasharray="3 3"/><path d="M700.8 79V267.5" stroke="#b0b0b0" stroke-width="1" stroke-dasharray="3 3"/><path d="M671.1 79V267.5" stroke="#b0b0b0" stroke-width="1" stroke-dasharray="3 3"/><path d="M641.5 79V267.5" stroke="#b0b0b0" stroke-width="1" stroke-dasharray="3 3"/><path d="M611.8 79V267.5" stroke="#b0b0b0" stroke-width="1" stroke-dasharray="3 3"/><path d="M582.1 79V267.5" stroke="#b0b0b0" stroke-width="1" stroke-dasharray="3 3"/><path d="M552.5 79V267.5" stroke="#b0b0b0" stroke-width="1" stroke-dasharray="3 3"/><path d="M522.8 79V267.5" stroke="#b0b0b0" stroke-width="1" stroke-dasharray="3 3"/><path d="M493.1 79V267.5" stroke="#b0b0b0" stroke-width="1" stroke-dasharray="3 3"/><path d="M463.5 79V267.5" stroke="#b0b0b0" stroke-width="1" stroke-dasharray="3 3"/><path d="M433.8 79V267.5" stroke="#b0b0b0" stroke-width="1" stroke-dasharray="3 3"/><path d="M404.1 79V267.5" stroke="#b0b0b0" stroke-width="1" stroke-dasharray="3 3"/><path d="M374.4 79V267.5" stroke="#b0b0b0" stroke-width="1" stroke-dasharray="3 3"/><path d="M344.8 79V267.5" stroke="#b0b0b0" stroke-width="1" stroke-dasharray="3 3"/><path d="M315.1 79V267.5" stroke="#b0b0b0" stroke-width="1" stroke-dasharray="3 3"/><path d="M285.4 79V267.5" stroke="#b0b0b0" stroke-width="1" stroke-dasharray="3 3"/><path d="M255.8 79V267.5" stroke="#b0b0b0" stroke-width="1" stroke-dasharray="3 3"/><path d="M226.1 79V267.5" stroke="#b0b0b0" stroke-width="1" stroke-dasharray="3 3"/><path d="M196.4 79V267.5" stroke="#b0b0b0" stroke-width="1" stroke-dasharray="3 3"/></svg>
<div class="a" style="left:166.5px;top:93.3px;width:5px;height:2px;background:#00d000;"></div>
<div class="a" style="left:177px;top:96.5px;width:10px;height:9px;background:#ffffff;box-sizing:border-box;border:1.5px solid #30e030;"></div>
<div class="a" style="left:180px;top:255.5px;width:1.6px;height:12px;background:#00c000;"></div>
<div class="a" style="left:1170px;top:224px;width:11.5px;height:11.5px;background:#000;box-sizing:border-box;border:1.3px solid #10c010;"></div>
<div class="a" style="left:1185.5px;top:217.8px;width:10.5px;height:7px;background:#000;box-sizing:border-box;border:1.3px solid #10c010;"></div>
<div class="a" style="left:1190.2px;top:216px;width:1.2px;height:2px;background:#10c010;"></div>
<div class="a" style="left:1174.6px;top:256.8px;width:1.6px;height:11px;background:#10c010;"></div>
<div class="a" style="left:1189.6px;top:259.5px;width:1.6px;height:8px;background:#10c010;"></div>
<div class="a" style="left:165.5px;top:219px;width:1054px;height:1.2px;background:#8a8a8a;"></div>
<div class="a" style="left:186px;top:98.3px;width:324.5px;height:175px;background:#141a27;box-sizing:border-box;border:2px solid #3c5ed0;"></div>
<div class="a t" style="left:195px;top:109.4px;font-size:15px;line-height:19px;color:#d2d2d2;letter-spacing:0.10px;">太极之境Pro - 主面板</div>
<div class="a" style="left:482px;top:107.5px;width:19px;height:19px;background:#7c7c7c;box-sizing:border-box;border:1.2px solid #d0d0d0;border-radius:2px;"></div>
<div class="a" style="left:489.8px;top:116.6px;width:3.8px;height:1px;background:#f4f4f4;"></div>
<div class="a t" style="left:199px;top:136.9px;font-size:12px;line-height:16px;color:#e8a21c;-webkit-text-stroke:0.38px #e8a21c;letter-spacing:0.25px;">账号信息</div>
<div class="a t" style="left:367px;top:136.9px;font-size:12px;line-height:16px;color:#e8a21c;-webkit-text-stroke:0.38px #e8a21c;letter-spacing:-0.00px;">时间限制</div>
<div class="a t" style="left:199px;top:154.9px;font-size:12px;line-height:16px;color:#2b9fd9;-webkit-text-stroke:0.38px #2b9fd9;letter-spacing:-0.67px;">账号状态:</div>
<div class="a t" style="left:260px;top:154.9px;font-size:12px;line-height:16px;color:#e0222a;-webkit-text-stroke:0.38px #e0222a;letter-spacing:-0.75px;">验证成功</div>
<div class="a t" style="left:367px;top:154.9px;font-size:12px;line-height:16px;color:#2b9fd9;-webkit-text-stroke:0.38px #2b9fd9;transform:scaleX(0.915);transform-origin:left center;">到期时间:</div>
<div class="a t" style="left:426.5px;top:154.9px;font-size:12px;line-height:16px;color:#e4e4e4;-webkit-text-stroke:0.2px #e4e4e4;letter-spacing:-0.18px;">2026.02.06 23:59</div>
<div class="a t" style="left:199px;top:171.4px;font-size:12px;line-height:16px;color:#2b9fd9;-webkit-text-stroke:0.38px #2b9fd9;letter-spacing:-0.67px;">账号号码:</div>
<div class="a t" style="left:260px;top:171.4px;font-size:12px;line-height:16px;color:#e4e4e4;-webkit-text-stroke:0.2px #e4e4e4;letter-spacing:-0.17px;">95247299</div>
<div class="a t" style="left:367px;top:171.4px;font-size:12px;line-height:16px;color:#2b9fd9;-webkit-text-stroke:0.38px #2b9fd9;transform:scaleX(0.915);transform-origin:left center;">剩余时间:</div>
<div class="a t" style="left:426.5px;top:171.4px;font-size:12px;line-height:16px;color:#1fd21f;-webkit-text-stroke:0.38px #1fd21f;letter-spacing:-0.19px;">7天 17:05</div>
<div class="a" style="left:195px;top:184px;width:305px;height:1.2px;background:#070a10;"></div>
<div class="a t" style="left:199px;top:195.9px;font-size:12px;line-height:16px;color:#e8a21c;-webkit-text-stroke:0.38px #e8a21c;letter-spacing:0.25px;">交易状态</div>
<div class="a t" style="left:367px;top:195.9px;font-size:12px;line-height:16px;color:#e8a21c;-webkit-text-stroke:0.38px #e8a21c;letter-spacing:-0.00px;">多空判定</div>
<div class="a t" style="left:199px;top:212.9px;font-size:12px;line-height:16px;color:#2b9fd9;-webkit-text-stroke:0.38px #2b9fd9;letter-spacing:-0.67px;">订单状态:</div>
<div class="a t" style="left:260px;top:212.9px;font-size:12px;line-height:16px;color:#e4e4e4;-webkit-text-stroke:0.2px #e4e4e4;letter-spacing:0.16px;">0/12</div>
<div class="a t" style="left:367px;top:212.9px;font-size:12px;line-height:16px;color:#2b9fd9;-webkit-text-stroke:0.38px #2b9fd9;transform:scaleX(0.914);transform-origin:left center;">信号:</div>
<div class="a t" style="left:426.5px;top:212.9px;font-size:12px;line-height:16px;color:#e8a21c;-webkit-text-stroke:0.38px #e8a21c;transform:scaleX(0.921);transform-origin:left center;">观望(RSI:45.1)</div>
<div class="a t" style="left:199px;top:229.9px;font-size:12px;line-height:16px;color:#2b9fd9;-webkit-text-stroke:0.38px #2b9fd9;letter-spacing:-0.59px;">总手数:</div>
<div class="a t" style="left:260px;top:229.9px;font-size:12px;line-height:16px;color:#e4e4e4;-webkit-text-stroke:0.2px #e4e4e4;letter-spacing:-0.21px;">0.000</div>
<div class="a t" style="left:367px;top:229.9px;font-size:12px;line-height:16px;color:#2b9fd9;-webkit-text-stroke:0.38px #2b9fd9;transform:scaleX(0.915);transform-origin:left center;">趋势强度:</div>
<div class="a t" style="left:426.5px;top:229.9px;font-size:12px;line-height:16px;color:#e8a21c;-webkit-text-stroke:0.38px #e8a21c;letter-spacing:-0.31px;">17.4%</div>
<div class="a t" style="left:199px;top:246.4px;font-size:12px;line-height:16px;color:#2b9fd9;-webkit-text-stroke:0.38px #2b9fd9;letter-spacing:-0.67px;">当前盈亏:</div>
<div class="a t" style="left:260px;top:246.4px;font-size:12px;line-height:16px;color:#1fd21f;-webkit-text-stroke:0.38px #1fd21f;letter-spacing:-0.21px;">$0.00</div>
<div class="a t" style="left:367px;top:246.4px;font-size:12px;line-height:16px;color:#2b9fd9;-webkit-text-stroke:0.38px #2b9fd9;transform:scaleX(0.915);transform-origin:left center;">价格均线:</div>
<div class="a t" style="left:426.5px;top:246.4px;font-size:12px;line-height:16px;color:#e8a21c;-webkit-text-stroke:0.38px #e8a21c;letter-spacing:-0.30px;">5265.853 (下方)</div>
<div class="a t" style="left:199px;top:262.9px;font-size:12px;line-height:16px;color:#2b9fd9;-webkit-text-stroke:0.38px #2b9fd9;letter-spacing:-0.67px;">最大浮亏:</div>
<div class="a t" style="left:260px;top:262.9px;font-size:12px;line-height:16px;color:#e0222a;-webkit-text-stroke:0.38px #e0222a;letter-spacing:-0.21px;">$0.00</div>
<div class="a t" style="left:367px;top:262.9px;font-size:12px;line-height:16px;color:#2b9fd9;-webkit-text-stroke:0.38px #2b9fd9;transform:scaleX(0.887);transform-origin:left center;">RSI水平:</div>
<div class="a t" style="left:426.5px;top:262.9px;font-size:12px;line-height:16px;color:#e8a21c;-webkit-text-stroke:0.38px #e8a21c;letter-spacing:-0.21px;">45.1</div>
<div class="a" style="left:515.5px;top:98.3px;width:324.0px;height:175px;background:#141a27;box-sizing:border-box;border:2px solid #3c5ed0;"></div>
<div class="a t" style="left:524.5px;top:109.4px;font-size:15px;line-height:19px;color:#d2d2d2;letter-spacing:0.13px;">太极之境Pro - 状态面板</div>
<div class="a" style="left:811.5px;top:107.5px;width:19px;height:19px;background:#7c7c7c;box-sizing:border-box;border:1.2px solid #d0d0d0;border-radius:2px;"></div>
<div class="a" style="left:819.3px;top:116.6px;width:3.8px;height:1px;background:#f4f4f4;"></div>
<div class="a t" style="left:529px;top:136.9px;font-size:12px;line-height:16px;color:#e8a21c;-webkit-text-stroke:0.38px #e8a21c;letter-spacing:-0.00px;">间距模型信息</div>
<div class="a t" style="left:696px;top:136.9px;font-size:12px;line-height:16px;color:#e8a21c;-webkit-text-stroke:0.38px #e8a21c;letter-spacing:-0.00px;">技术指标</div>
<div class="a t" style="left:529px;top:154.9px;font-size:12px;line-height:16px;color:#2b9fd9;-webkit-text-stroke:0.38px #2b9fd9;transform:scaleX(0.915);transform-origin:left center;">模型类型:</div>
<div class="a t" style="left:589.5px;top:154.9px;font-size:12px;line-height:16px;color:#d6d622;-webkit-text-stroke:0.38px #d6d622;transform:scaleX(0.923);transform-origin:left center;">高级动态间距</div>
<div class="a t" style="left:696px;top:154.9px;font-size:12px;line-height:16px;color:#2b9fd9;-webkit-text-stroke:0.38px #2b9fd9;transform:scaleX(0.915);transform-origin:left center;">加仓间距:</div>
<div class="a t" style="left:756.5px;top:154.9px;font-size:12px;line-height:16px;color:#e4e4e4;-webkit-text-stroke:0.2px #e4e4e4;letter-spacing:-0.36px;">10000.0点</div>
<div class="a t" style="left:529px;top:171.4px;font-size:12px;line-height:16px;color:#2b9fd9;-webkit-text-stroke:0.38px #2b9fd9;transform:scaleX(0.915);transform-origin:left center;">市场状态:</div>
<div class="a t" style="left:589.5px;top:171.4px;font-size:12px;line-height:16px;color:#e4e4e4;-webkit-text-stroke:0.2px #e4e4e4;letter-spacing:-0.58px;">MARKET_NORMAL</div>
<div class="a t" style="left:696px;top:171.4px;font-size:12px;line-height:16px;color:#2b9fd9;-webkit-text-stroke:0.38px #2b9fd9;transform:scaleX(0.900);transform-origin:left center;">ATR(1):</div>
<div class="a t" style="left:774.5px;top:171.4px;font-size:12px;line-height:16px;color:#e4e4e4;-webkit-text-stroke:0.2px #e4e4e4;letter-spacing:-0.23px;">34086.71429</div>
<div class="a t" style="left:529px;top:187.9px;font-size:12px;line-height:16px;color:#2b9fd9;-webkit-text-stroke:0.38px #2b9fd9;transform:scaleX(0.915);transform-origin:left center;">趋势系数:</div>
<div class="a t" style="left:589.5px;top:187.9px;font-size:12px;line-height:16px;color:#e4e4e4;-webkit-text-stroke:0.2px #e4e4e4;letter-spacing:-0.21px;">1.50</div>
<div class="a t" style="left:696px;top:187.9px;font-size:12px;line-height:16px;color:#2b9fd9;-webkit-text-stroke:0.38px #2b9fd9;transform:scaleX(0.915);transform-origin:left center;">动量波动:</div>
<div class="a t" style="left:756.5px;top:187.9px;font-size:12px;line-height:16px;color:#e4e4e4;-webkit-text-stroke:0.2px #e4e4e4;letter-spacing:-0.15px;">100.11360</div>
<div class="a t" style="left:529px;top:204.9px;font-size:12px;line-height:16px;color:#2b9fd9;-webkit-text-stroke:0.38px #2b9fd9;transform:scaleX(0.915);transform-origin:left center;">综合波动:</div>
<div class="a t" style="left:589.5px;top:204.9px;font-size:12px;line-height:16px;color:#e4e4e4;-webkit-text-stroke:0.2px #e4e4e4;letter-spacing:-0.23px;">36428.15230</div>
<div class="a t" style="left:696px;top:204.9px;font-size:12px;line-height:16px;color:#2b9fd9;-webkit-text-stroke:0.38px #2b9fd9;transform:scaleX(0.895);transform-origin:left center;">RSI(14):</div>
<div class="a t" style="left:774.5px;top:204.9px;font-size:12px;line-height:16px;color:#e4e4e4;-webkit-text-stroke:0.2px #e4e4e4;transform:scaleX(0.920);transform-origin:left center;">45.1</div>
<div class="a" style="left:525px;top:219px;width:305px;height:1.2px;background:#070a10;"></div>
<div class="a t" style="left:529px;top:228.9px;font-size:12px;line-height:16px;color:#e8a21c;-webkit-text-stroke:0.38px #e8a21c;letter-spacing:-0.00px;">高级模型参数</div>
<div class="a t" style="left:529px;top:246.4px;font-size:12px;line-height:16px;color:#2b9fd9;-webkit-text-stroke:0.38px #2b9fd9;transform:scaleX(0.913);transform-origin:left center;">当前ATR权重:</div>
<div class="a t" style="left:607.5px;top:246.4px;font-size:12px;line-height:16px;color:#e4e4e4;-webkit-text-stroke:0.2px #e4e4e4;letter-spacing:-0.21px;">0.80</div>
<div class="a t" style="left:696px;top:246.4px;font-size:12px;line-height:16px;color:#2b9fd9;-webkit-text-stroke:0.38px #2b9fd9;transform:scaleX(0.916);transform-origin:left center;">强趋势系数:</div>
<div class="a t" style="left:756.5px;top:246.4px;font-size:12px;line-height:16px;color:#e4e4e4;-webkit-text-stroke:0.2px #e4e4e4;transform:scaleX(0.929);transform-origin:left center;">1.5</div>
<div class="a t" style="left:529px;top:262.9px;font-size:12px;line-height:16px;color:#2b9fd9;-webkit-text-stroke:0.38px #2b9fd9;transform:scaleX(0.889);transform-origin:left center;">M15 ATR权重:</div>
<div class="a t" style="left:607.5px;top:262.9px;font-size:12px;line-height:16px;color:#e4e4e4;-webkit-text-stroke:0.2px #e4e4e4;letter-spacing:-0.21px;">0.05</div>
<div class="a t" style="left:696px;top:262.9px;font-size:12px;line-height:16px;color:#2b9fd9;-webkit-text-stroke:0.38px #2b9fd9;transform:scaleX(0.916);transform-origin:left center;">弱趋势系数:</div>
<div class="a t" style="left:756.5px;top:262.9px;font-size:12px;line-height:16px;color:#e4e4e4;-webkit-text-stroke:0.2px #e4e4e4;transform:scaleX(0.929);transform-origin:left center;">0.8</div>
<div class="a" style="left:844.5px;top:98.3px;width:324.0px;height:175px;background:#141a27;box-sizing:border-box;border:2px solid #3c5ed0;"></div>
<div class="a t" style="left:853.5px;top:109.4px;font-size:15px;line-height:19px;color:#d2d2d2;letter-spacing:0.13px;">太极之境Pro - 对冲面板</div>
<div class="a" style="left:1140.5px;top:107.5px;width:19px;height:19px;background:#7c7c7c;box-sizing:border-box;border:1.2px solid #d0d0d0;border-radius:2px;"></div>
<div class="a" style="left:1148.3px;top:116.6px;width:3.8px;height:1px;background:#f4f4f4;"></div>
<div class="a t" style="left:858px;top:136.9px;font-size:12px;line-height:16px;color:#e8a21c;-webkit-text-stroke:0.38px #e8a21c;letter-spacing:-0.00px;">尾单对冲功能</div>
<div class="a t" style="left:858px;top:154.9px;font-size:12px;line-height:16px;color:#2b9fd9;-webkit-text-stroke:0.38px #2b9fd9;transform:scaleX(0.914);transform-origin:left center;">状态:</div>
<div class="a t" style="left:918.5px;top:154.9px;font-size:12px;line-height:16px;color:#2b9fd9;-webkit-text-stroke:0.38px #2b9fd9;transform:scaleX(0.902);transform-origin:left center;">已启用</div>
<div class="a t" style="left:1025px;top:154.9px;font-size:12px;line-height:16px;color:#2b9fd9;-webkit-text-stroke:0.38px #2b9fd9;transform:scaleX(0.915);transform-origin:left center;">尾单盈利:</div>
<div class="a t" style="left:1085px;top:154.9px;font-size:12px;line-height:16px;color:#e4e4e4;-webkit-text-stroke:0.2px #e4e4e4;letter-spacing:-0.52px;">无</div>
<div class="a t" style="left:858px;top:171.4px;font-size:12px;line-height:16px;color:#2b9fd9;-webkit-text-stroke:0.38px #2b9fd9;transform:scaleX(0.915);transform-origin:left center;">触发条件:</div>
<div class="a t" style="left:918.5px;top:171.4px;font-size:12px;line-height:16px;color:#e4e4e4;-webkit-text-stroke:0.2px #e4e4e4;letter-spacing:-0.07px;">订单&gt;=8,盈利&gt;=2200.0点</div>
<div class="a t" style="left:858px;top:187.9px;font-size:12px;line-height:16px;color:#2b9fd9;-webkit-text-stroke:0.38px #2b9fd9;transform:scaleX(0.915);transform-origin:left center;">对冲比例:</div>
<div class="a t" style="left:918.5px;top:187.9px;font-size:12px;line-height:16px;color:#e4e4e4;-webkit-text-stroke:0.2px #e4e4e4;letter-spacing:-0.51px;">50%</div>
<div class="a t" style="left:1025px;top:187.9px;font-size:12px;line-height:16px;color:#2b9fd9;-webkit-text-stroke:0.38px #2b9fd9;transform:scaleX(0.915);transform-origin:left center;">对冲订单:</div>
<div class="a t" style="left:1085px;top:187.9px;font-size:12px;line-height:16px;color:#e4e4e4;-webkit-text-stroke:0.2px #e4e4e4;letter-spacing:-0.34px;">0单</div>
<div class="a t" style="left:858px;top:204.9px;font-size:12px;line-height:16px;color:#2b9fd9;-webkit-text-stroke:0.38px #2b9fd9;transform:scaleX(0.915);transform-origin:left center;">起始订单:</div>
<div class="a t" style="left:918.5px;top:204.9px;font-size:12px;line-height:16px;color:#e4e4e4;-webkit-text-stroke:0.2px #e4e4e4;transform:scaleX(0.929);transform-origin:left center;">第1单</div>
<div class="a t" style="left:1025px;top:204.9px;font-size:12px;line-height:16px;color:#2b9fd9;-webkit-text-stroke:0.38px #2b9fd9;transform:scaleX(0.915);transform-origin:left center;">最大对冲:</div>
<div class="a t" style="left:1085px;top:204.9px;font-size:12px;line-height:16px;color:#e4e4e4;-webkit-text-stroke:0.2px #e4e4e4;letter-spacing:-0.34px;">4单</div>
<div class="a" style="left:854px;top:219px;width:306px;height:1.2px;background:#070a10;"></div>
<div class="a t" style="left:858px;top:228.9px;font-size:12px;line-height:16px;color:#e8a21c;-webkit-text-stroke:0.38px #e8a21c;letter-spacing:-0.00px;">对冲统计</div>
<div class="a t" style="left:858px;top:246.4px;font-size:12px;line-height:16px;color:#2b9fd9;-webkit-text-stroke:0.38px #2b9fd9;transform:scaleX(0.916);transform-origin:left center;">总对冲次数:</div>
<div class="a t" style="left:918.5px;top:246.4px;font-size:12px;line-height:16px;color:#e4e4e4;-webkit-text-stroke:0.2px #e4e4e4;letter-spacing:-0.19px;">0</div>
<div class="a t" style="left:858px;top:262.9px;font-size:12px;line-height:16px;color:#2b9fd9;-webkit-text-stroke:0.38px #2b9fd9;transform:scaleX(0.916);transform-origin:left center;">总对冲盈利:</div>
<div class="a t" style="left:918.5px;top:262.9px;font-size:12px;line-height:16px;color:#e4e4e4;-webkit-text-stroke:0.2px #e4e4e4;letter-spacing:-0.31px;">$0.00</div>
<svg class="a" style="left:0px;top:0px;" width="1280" height="300" viewBox="0 0 1280 300"><g fill="none" stroke="#2a78c0" stroke-width="1.1" stroke-dasharray="1.5 2.6" opacity="0.9"><path d="M359 156L537 160.5"/><path d="M374 174.4L537 160.5"/><path d="M389 192.4L537 160.5"/><path d="M660 196L686 201.3L671.2 222"/></g><rect x="510.6" y="172.6" width="2.6" height="14" fill="#ffffff" stroke="#20d020" stroke-width="0.8"/><path d="M359.2 151.3L363.9 156L359.2 160.7L354.5 156Z" fill="#f2f6ff" stroke="#f2f6ff" stroke-width="0.8" stroke-linejoin="round"/><path d="M359.2 153.0L362.2 156L359.2 159.0L356.2 156Z" fill="#2060c8"/><path d="M374 169.70000000000002L378.7 174.4L374 179.1L369.3 174.4Z" fill="#f2f6ff" stroke="#f2f6ff" stroke-width="0.8" stroke-linejoin="round"/><path d="M374 171.4L377.0 174.4L374 177.4L371.0 174.4Z" fill="#2060c8"/><path d="M389 187.70000000000002L393.7 192.4L389 197.1L384.3 192.4Z" fill="#f2f6ff" stroke="#f2f6ff" stroke-width="0.8" stroke-linejoin="round"/><path d="M389 189.4L392.0 192.4L389 195.4L386.0 192.4Z" fill="#2060c8"/><path d="M537 155.8L541.7 160.5L537 165.2L532.3 160.5Z" fill="#f2f6ff" stroke="#f2f6ff" stroke-width="0.8" stroke-linejoin="round"/><path d="M537 157.5L540.0 160.5L537 163.5L534.0 160.5Z" fill="#e84020"/><path d="M686 196.60000000000002L690.7 201.3L686 206.0L681.3 201.3Z" fill="#f2f6ff" stroke="#f2f6ff" stroke-width="0.8" stroke-linejoin="round"/><path d="M686 198.3L689.0 201.3L686 204.3L683.0 201.3Z" fill="#e84020"/><path d="M671.2 217.3L675.9000000000001 222L671.2 226.7L666.5 222Z" fill="#f2f6ff" stroke="#f2f6ff" stroke-width="0.8" stroke-linejoin="round"/><path d="M671.2 219.0L674.2 222L671.2 225.0L668.2 222Z" fill="#2060c8"/><rect x="652.0999999999999" y="189.5" width="8.4" height="20.30000000000001" rx="3" fill="#f2f6ff"/><path d="M656.3 185.5L660.8 190.0L656.3 194.5L651.8 190.0Z" fill="#f2f6ff" stroke="#f2f6ff" stroke-width="0.8" stroke-linejoin="round"/><path d="M656.3 187.2L659.0999999999999 190.0L656.3 192.8L653.5 190.0Z" fill="#e84020"/><path d="M656.3 195.0L659.0999999999999 198.0L656.3 201.0L653.5 198.0Z" fill="#2060c8"/><path d="M656.3 201.2L659.0999999999999 204.2L656.3 207.2L653.5 204.2Z" fill="#2060c8"/><rect x="844.8" y="204" width="8.4" height="25.5" rx="3" fill="#f2f6ff"/><path d="M849 200.0L853.5 204.5L849 209.0L844.5 204.5Z" fill="#f2f6ff" stroke="#f2f6ff" stroke-width="0.8" stroke-linejoin="round"/><path d="M849 201.7L851.8 204.5L849 207.3L846.2 204.5Z" fill="#e84020"/><path d="M849 209.5L851.8 212.5L849 215.5L846.2 212.5Z" fill="#2060c8"/><path d="M849 215.7L851.8 218.7L849 221.7L846.2 218.7Z" fill="#2060c8"/><path d="M849 221.89999999999998L851.8 224.89999999999998L849 227.89999999999998L846.2 224.89999999999998Z" fill="#2060c8"/><path d="M849 230.5L853.7 235.2L849 239.89999999999998L844.3 235.2Z" fill="#f2f6ff" stroke="#f2f6ff" stroke-width="0.8" stroke-linejoin="round"/><path d="M849 232.2L852.0 235.2L849 238.2L846.0 235.2Z" fill="#2060c8"/><path d="M864 216.60000000000002L868.7 221.3L864 226.0L859.3 221.3Z" fill="#f2f6ff" stroke="#f2f6ff" stroke-width="0.8" stroke-linejoin="round"/><path d="M864 218.3L867.0 221.3L864 224.3L861.0 221.3Z" fill="#e84020"/><path d="M864 233.0L868.7 237.7L864 242.39999999999998L859.3 237.7Z" fill="#f2f6ff" stroke="#f2f6ff" stroke-width="0.8" stroke-linejoin="round"/><path d="M864 234.7L867.0 237.7L864 240.7L861.0 237.7Z" fill="#2060c8"/><rect x="904.1999999999999" y="216.5" width="8.4" height="25.0" rx="3" fill="#f2f6ff"/><path d="M908.4 212.5L912.9 217.0L908.4 221.5L903.9 217.0Z" fill="#f2f6ff" stroke="#f2f6ff" stroke-width="0.8" stroke-linejoin="round"/><path d="M908.4 214.2L911.1999999999999 217.0L908.4 219.8L905.6 217.0Z" fill="#e84020"/><path d="M908.4 222.0L911.1999999999999 225.0L908.4 228.0L905.6 225.0Z" fill="#2060c8"/><path d="M908.4 228.2L911.1999999999999 231.2L908.4 234.2L905.6 231.2Z" fill="#2060c8"/><path d="M908.4 234.39999999999998L911.1999999999999 237.39999999999998L908.4 240.39999999999998L905.6 237.39999999999998Z" fill="#2060c8"/><path d="M923.3 210.3L928.0 215L923.3 219.7L918.5999999999999 215Z" fill="#f2f6ff" stroke="#f2f6ff" stroke-width="0.8" stroke-linejoin="round"/><path d="M923.3 212.0L926.3 215L923.3 218.0L920.3 215Z" fill="#e84020"/></svg>
<svg class="a" style="left:171px;top:84.5px;" width="13" height="10" viewBox="0 0 13 10"><rect x="0" y="0" width="13" height="10" fill="#fff"/><path d="M0.5 0.5H6V2.6H0.5ZM0.5 3.9H6V6H0.5ZM0.5 7.3H6V9.5H0.5Z" fill="#f08a7a"/><path d="M7 0.5H12.5V2.6H7ZM7 3.9H12.5V6H7ZM7 7.3H12.5V9.5H7Z" fill="#6aa8e8"/></svg>
<div class="a t" style="left:243px;top:83.3px;font-size:10px;line-height:14px;color:#f4f4f4;-webkit-text-stroke:0.25px #f4f4f4;transform:scaleX(0.863);transform-origin:left center;">Dm, M1:  Gold vs US Dollar</div>
<div class="a" style="left:185.5px;top:80.3px;width:56px;height:18px;background:#ff1414;box-sizing:border-box;border:1px solid #ff9a9a;"></div>
<div class="a t" style="left:191px;top:82.6px;font-size:11.5px;line-height:15.5px;color:#ffffff;letter-spacing:-0.25px;">隐藏面板</div>
<div class="a" style="left:191.5px;top:86px;width:3.2px;height:7px;background:#ffffff;"></div>
<div class="a" style="left:197.5px;top:88.5px;width:4px;height:5px;background:#5aa0e8;"></div>
<svg class="a" style="left:0px;top:0px;" width="1280" height="300" viewBox="0 0 1280 300"><path d="M165.5 267.5V79H1219.5V267.5" fill="none" stroke="#b4b4b4" stroke-width="1.2"/><path d="M165.5 267.5H1219.5" stroke="#e0e0e0" stroke-width="1.4"/></svg>
<div class="a" style="left:164px;top:268.2px;width:1108px;height:20px;background:#000;"></div>
<div class="a" style="left:1220.2px;top:77.5px;width:52px;height:210px;background:#000;"></div>
<div class="a" style="left:165.5px;top:268px;width:1.2px;height:3.5px;background:#e0e0e0;"></div>
<div class="a t" style="left:166.5px;top:270.8px;font-size:9.3px;line-height:13.3px;color:#e8e8e8;transform:scaleX(0.899);transform-origin:left center;">30 Jan 2026</div>
<div class="a" style="left:224.85px;top:268px;width:1.2px;height:3.5px;background:#e0e0e0;"></div>
<div class="a t" style="left:225.85px;top:270.8px;font-size:9.3px;line-height:13.3px;color:#e8e8e8;transform:scaleX(0.856);transform-origin:left center;">30 Jan 05:48</div>
<div class="a" style="left:284.2px;top:268px;width:1.2px;height:3.5px;background:#e0e0e0;"></div>
<div class="a t" style="left:285.2px;top:270.8px;font-size:9.3px;line-height:13.3px;color:#e8e8e8;transform:scaleX(0.856);transform-origin:left center;">30 Jan 05:52</div>
<div class="a" style="left:343.55px;top:268px;width:1.2px;height:3.5px;background:#e0e0e0;"></div>
<div class="a t" style="left:344.55px;top:270.8px;font-size:9.3px;line-height:13.3px;color:#e8e8e8;transform:scaleX(0.856);transform-origin:left center;">30 Jan 05:56</div>
<div class="a" style="left:402.9px;top:268px;width:1.2px;height:3.5px;background:#e0e0e0;"></div>
<div class="a t" style="left:403.9px;top:270.8px;font-size:9.3px;line-height:13.3px;color:#e8e8e8;transform:scaleX(0.856);transform-origin:left center;">30 Jan 06:00</div>
<div class="a" style="left:462.25px;top:268px;width:1.2px;height:3.5px;background:#e0e0e0;"></div>
<div class="a t" style="left:463.25px;top:270.8px;font-size:9.3px;line-height:13.3px;color:#e8e8e8;transform:scaleX(0.856);transform-origin:left center;">30 Jan 06:04</div>
<div class="a" style="left:521.6px;top:268px;width:1.2px;height:3.5px;background:#e0e0e0;"></div>
<div class="a t" style="left:522.6px;top:270.8px;font-size:9.3px;line-height:13.3px;color:#e8e8e8;transform:scaleX(0.856);transform-origin:left center;">30 Jan 06:08</div>
<div class="a" style="left:580.95px;top:268px;width:1.2px;height:3.5px;background:#e0e0e0;"></div>
<div class="a t" style="left:581.95px;top:270.8px;font-size:9.3px;line-height:13.3px;color:#e8e8e8;transform:scaleX(0.856);transform-origin:left center;">30 Jan 06:12</div>
<div class="a" style="left:640.3px;top:268px;width:1.2px;height:3.5px;background:#e0e0e0;"></div>
<div class="a t" style="left:641.3px;top:270.8px;font-size:9.3px;line-height:13.3px;color:#e8e8e8;transform:scaleX(0.856);transform-origin:left center;">30 Jan 06:16</div>
<div class="a" style="left:699.65px;top:268px;width:1.2px;height:3.5px;background:#e0e0e0;"></div>
<div class="a t" style="left:700.65px;top:270.8px;font-size:9.3px;line-height:13.3px;color:#e8e8e8;transform:scaleX(0.856);transform-origin:left center;">30 Jan 06:20</div>
<div class="a" style="left:759.0px;top:268px;width:1.2px;height:3.5px;background:#e0e0e0;"></div>
<div class="a t" style="left:760.0px;top:270.8px;font-size:9.3px;line-height:13.3px;color:#e8e8e8;transform:scaleX(0.856);transform-origin:left center;">30 Jan 06:24</div>
<div class="a" style="left:818.35px;top:268px;width:1.2px;height:3.5px;background:#e0e0e0;"></div>
<div class="a t" style="left:819.35px;top:270.8px;font-size:9.3px;line-height:13.3px;color:#e8e8e8;transform:scaleX(0.856);transform-origin:left center;">30 Jan 06:28</div>
<div class="a" style="left:877.7px;top:268px;width:1.2px;height:3.5px;background:#e0e0e0;"></div>
<div class="a t" style="left:878.7px;top:270.8px;font-size:9.3px;line-height:13.3px;color:#e8e8e8;transform:scaleX(0.856);transform-origin:left center;">30 Jan 06:32</div>
<div class="a" style="left:937.0500000000001px;top:268px;width:1.2px;height:3.5px;background:#e0e0e0;"></div>
<div class="a t" style="left:938.0500000000001px;top:270.8px;font-size:9.3px;line-height:13.3px;color:#e8e8e8;transform:scaleX(0.856);transform-origin:left center;">30 Jan 06:36</div>
<div class="a" style="left:996.4px;top:268px;width:1.2px;height:3.5px;background:#e0e0e0;"></div>
<div class="a t" style="left:997.4px;top:270.8px;font-size:9.3px;line-height:13.3px;color:#e8e8e8;transform:scaleX(0.856);transform-origin:left center;">30 Jan 06:40</div>
<div class="a" style="left:1055.75px;top:268px;width:1.2px;height:3.5px;background:#e0e0e0;"></div>
<div class="a t" style="left:1056.75px;top:270.8px;font-size:9.3px;line-height:13.3px;color:#e8e8e8;transform:scaleX(0.856);transform-origin:left center;">30 Jan 06:44</div>
<div class="a" style="left:1115.1px;top:268px;width:1.2px;height:3.5px;background:#e0e0e0;"></div>
<div class="a t" style="left:1116.1px;top:270.8px;font-size:9.3px;line-height:13.3px;color:#e8e8e8;transform:scaleX(0.856);transform-origin:left center;">30 Jan 06:48</div>
<div class="a" style="left:1174.45px;top:268px;width:1.2px;height:3.5px;background:#e0e0e0;"></div>
<div class="a t" style="left:1175.45px;top:270.8px;font-size:9.3px;line-height:13.3px;color:#e8e8e8;transform:scaleX(0.856);transform-origin:left center;">30 Jan 06:52</div>
<div class="a" style="left:1219.5px;top:89.30000000000001px;width:4px;height:1.2px;background:#e0e0e0;"></div>
<div class="a t" style="left:1224px;top:84.1px;font-size:9.2px;line-height:13.2px;color:#e2e2e2;letter-spacing:-0.23px;">5235.370</div>
<div class="a" style="left:1219.5px;top:119.30000000000001px;width:4px;height:1.2px;background:#e0e0e0;"></div>
<div class="a t" style="left:1224px;top:114.1px;font-size:9.2px;line-height:13.2px;color:#e2e2e2;letter-spacing:-0.23px;">5218.920</div>
<div class="a" style="left:1219.5px;top:148.9px;width:4px;height:1.2px;background:#e0e0e0;"></div>
<div class="a t" style="left:1224px;top:143.7px;font-size:9.2px;line-height:13.2px;color:#e2e2e2;letter-spacing:-0.23px;">5202.470</div>
<div class="a" style="left:1219.5px;top:178.6px;width:4px;height:1.2px;background:#e0e0e0;"></div>
<div class="a t" style="left:1224px;top:173.4px;font-size:9.2px;line-height:13.2px;color:#e2e2e2;letter-spacing:-0.23px;">5186.020</div>
<div class="a" style="left:1219.5px;top:208.3px;width:4px;height:1.2px;background:#e0e0e0;"></div>
<div class="a t" style="left:1224px;top:203.1px;font-size:9.2px;line-height:13.2px;color:#e2e2e2;letter-spacing:-0.23px;">5169.570</div>
<div class="a" style="left:1219.5px;top:238.1px;width:4px;height:1.2px;background:#e0e0e0;"></div>
<div class="a t" style="left:1224px;top:232.9px;font-size:9.2px;line-height:13.2px;color:#e2e2e2;letter-spacing:-0.23px;">5153.120</div>
<div class="a" style="left:1222.5px;top:214.8px;width:40px;height:9.8px;background:#8c9cae;"></div>
<div class="a t" style="left:1224px;top:213.5px;font-size:9.2px;line-height:13.2px;color:#101820;letter-spacing:-0.23px;">5163.979</div>
<div class="a t" style="left:1182.5px;top:84.5px;font-size:8px;line-height:12px;color:#f0f0f0;letter-spacing:-0.50px;">太极</div>
<svg class="a" style="left:1202px;top:84.5px;" width="14.4" height="10.8" viewBox="0 0 16 12"><path d="M8 0.6L15.6 3.6L8 6.6L0.4 3.6Z" fill="#3aa0ee"/><path d="M3.6 5.6V8.6Q8 11.6 12.4 8.6V5.6L8 7.4Z" fill="#2a80d8"/><path d="M1.6 4.2V9.4" stroke="#3aa0ee" stroke-width="1.1"/><circle cx="1.6" cy="10" r="1.1" fill="#3aa0ee"/></svg>
</div></div>
<div class="a" style="left:8px;top:288px;width:1264px;height:2px;background:#f0f0f0;"></div>
<div class="a" style="left:8px;top:291px;width:14px;height:330px;background:#c3d2e2;"></div>
<div class="a" style="left:22px;top:291px;width:1250px;height:307px;background:#ffffff;"></div>
<div class="a" style="left:22px;top:290.5px;width:1250px;height:1px;background:#dcdcdc;"></div>
<svg class="a" style="left:11.5px;top:297.5px;" width="8" height="8" viewBox="0 0 8 8"><path d="M0.6 0.6L7.4 7.4M7.4 0.6L0.6 7.4" stroke="#1a1a1a" stroke-width="1.6"/></svg>
<div class="a t" style="left:15px;top:594px;width:0;height:0;"><div class="a t" style="left:-40px;top:-8px;width:80px;height:16px;line-height:16px;font-size:12px;color:#33414f;text-align:center;transform:rotate(-90deg);">策略测试</div></div>
<svg class="a" style="left:0px;top:0px;" width="1280" height="600" viewBox="0 0 1280 600"><path d="M59.7 296V525.5M59.7 527.8V583.5" stroke="#cfcfcf" stroke-width="1" stroke-dasharray="2.5 2.5"/><path d="M89.4 296V525.5M89.4 527.8V583.5" stroke="#cfcfcf" stroke-width="1" stroke-dasharray="2.5 2.5"/><path d="M119.0 296V525.5M119.0 527.8V583.5" stroke="#cfcfcf" stroke-width="1" stroke-dasharray="2.5 2.5"/><path d="M148.7 296V525.5M148.7 527.8V583.5" stroke="#cfcfcf" stroke-width="1" stroke-dasharray="2.5 2.5"/><path d="M178.3 296V525.5M178.3 527.8V583.5" stroke="#cfcfcf" stroke-width="1" stroke-dasharray="2.5 2.5"/><path d="M208.0 296V525.5M208.0 527.8V583.5" stroke="#cfcfcf" stroke-width="1" stroke-dasharray="2.5 2.5"/><path d="M237.7 296V525.5M237.7 527.8V583.5" stroke="#cfcfcf" stroke-width="1" stroke-dasharray="2.5 2.5"/><path d="M267.3 296V525.5M267.3 527.8V583.5" stroke="#cfcfcf" stroke-width="1" stroke-dasharray="2.5 2.5"/><path d="M297.0 296V525.5M297.0 527.8V583.5" stroke="#cfcfcf" stroke-width="1" stroke-dasharray="2.5 2.5"/><path d="M326.6 296V525.5M326.6 527.8V583.5" stroke="#cfcfcf" stroke-width="1" stroke-dasharray="2.5 2.5"/><path d="M356.3 296V525.5M356.3 527.8V583.5" stroke="#cfcfcf" stroke-width="1" stroke-dasharray="2.5 2.5"/><path d="M386.0 296V525.5M386.0 527.8V583.5" stroke="#cfcfcf" stroke-width="1" stroke-dasharray="2.5 2.5"/><path d="M415.6 296V525.5M415.6 527.8V583.5" stroke="#cfcfcf" stroke-width="1" stroke-dasharray="2.5 2.5"/><path d="M445.3 296V525.5M445.3 527.8V583.5" stroke="#cfcfcf" stroke-width="1" stroke-dasharray="2.5 2.5"/><path d="M474.9 296V525.5M474.9 527.8V583.5" stroke="#cfcfcf" stroke-width="1" stroke-dasharray="2.5 2.5"/><path d="M504.6 296V525.5M504.6 527.8V583.5" stroke="#cfcfcf" stroke-width="1" stroke-dasharray="2.5 2.5"/><path d="M534.3 296V525.5M534.3 527.8V583.5" stroke="#cfcfcf" stroke-width="1" stroke-dasharray="2.5 2.5"/><path d="M563.9 296V525.5M563.9 527.8V583.5" stroke="#cfcfcf" stroke-width="1" stroke-dasharray="2.5 2.5"/><path d="M593.6 296V525.5M593.6 527.8V583.5" stroke="#cfcfcf" stroke-width="1" stroke-dasharray="2.5 2.5"/><path d="M623.2 296V525.5M623.2 527.8V583.5" stroke="#cfcfcf" stroke-width="1" stroke-dasharray="2.5 2.5"/><path d="M652.9 296V525.5M652.9 527.8V583.5" stroke="#cfcfcf" stroke-width="1" stroke-dasharray="2.5 2.5"/><path d="M682.6 296V525.5M682.6 527.8V583.5" stroke="#cfcfcf" stroke-width="1" stroke-dasharray="2.5 2.5"/><path d="M712.2 296V525.5M712.2 527.8V583.5" stroke="#cfcfcf" stroke-width="1" stroke-dasharray="2.5 2.5"/><path d="M741.9 296V525.5M741.9 527.8V583.5" stroke="#cfcfcf" stroke-width="1" stroke-dasharray="2.5 2.5"/><path d="M771.5 296V525.5M771.5 527.8V583.5" stroke="#cfcfcf" stroke-width="1" stroke-dasharray="2.5 2.5"/><path d="M801.2 296V525.5M801.2 527.8V583.5" stroke="#cfcfcf" stroke-width="1" stroke-dasharray="2.5 2.5"/><path d="M830.9 296V525.5M830.9 527.8V583.5" stroke="#cfcfcf" stroke-width="1" stroke-dasharray="2.5 2.5"/><path d="M860.5 296V525.5M860.5 527.8V583.5" stroke="#cfcfcf" stroke-width="1" stroke-dasharray="2.5 2.5"/><path d="M890.2 296V525.5M890.2 527.8V583.5" stroke="#cfcfcf" stroke-width="1" stroke-dasharray="2.5 2.5"/><path d="M919.8 296V525.5M919.8 527.8V583.5" stroke="#cfcfcf" stroke-width="1" stroke-dasharray="2.5 2.5"/><path d="M949.5 296V525.5M949.5 527.8V583.5" stroke="#cfcfcf" stroke-width="1" stroke-dasharray="2.5 2.5"/><path d="M979.2 296V525.5M979.2 527.8V583.5" stroke="#cfcfcf" stroke-width="1" stroke-dasharray="2.5 2.5"/><path d="M1008.8 296V525.5M1008.8 527.8V583.5" stroke="#cfcfcf" stroke-width="1" stroke-dasharray="2.5 2.5"/><path d="M1038.5 296V525.5M1038.5 527.8V583.5" stroke="#cfcfcf" stroke-width="1" stroke-dasharray="2.5 2.5"/><path d="M1068.1 296V525.5M1068.1 527.8V583.5" stroke="#cfcfcf" stroke-width="1" stroke-dasharray="2.5 2.5"/><path d="M1097.8 296V525.5M1097.8 527.8V583.5" stroke="#cfcfcf" stroke-width="1" stroke-dasharray="2.5 2.5"/><path d="M1127.5 296V525.5M1127.5 527.8V583.5" stroke="#cfcfcf" stroke-width="1" stroke-dasharray="2.5 2.5"/><path d="M1157.1 296V525.5M1157.1 527.8V583.5" stroke="#cfcfcf" stroke-width="1" stroke-dasharray="2.5 2.5"/><path d="M1186.8 296V525.5M1186.8 527.8V583.5" stroke="#cfcfcf" stroke-width="1" stroke-dasharray="2.5 2.5"/><path d="M1216.4 296V525.5M1216.4 527.8V583.5" stroke="#cfcfcf" stroke-width="1" stroke-dasharray="2.5 2.5"/><path d="M28 317.6H1231" stroke="#cfcfcf" stroke-width="1" stroke-dasharray="2.5 2.5"/><path d="M28 347H1231" stroke="#cfcfcf" stroke-width="1" stroke-dasharray="2.5 2.5"/><path d="M28 376.4H1231" stroke="#cfcfcf" stroke-width="1" stroke-dasharray="2.5 2.5"/><path d="M28 405.9H1231" stroke="#cfcfcf" stroke-width="1" stroke-dasharray="2.5 2.5"/><path d="M28 435.4H1231" stroke="#cfcfcf" stroke-width="1" stroke-dasharray="2.5 2.5"/><path d="M28 464.8H1231" stroke="#cfcfcf" stroke-width="1" stroke-dasharray="2.5 2.5"/><path d="M28 494.3H1231" stroke="#cfcfcf" stroke-width="1" stroke-dasharray="2.5 2.5"/><path d="M28.4 515.9 L60.0 515.3 L100.6 514.6 L147.6 513.3 L194.7 511.6 L235.0 510.2 L268.6 507.6 L298.8 505.5 L329.0 501.9 L359.3 499.2 L389.5 496.5 L423.0 493.5 L450.0 491.1 L473.6 488.4 L507.2 485.1 L540.8 482.4 L582.8 478.3 L611.3 474.6 L626.4 471.3 L655.0 466.6 L688.6 462.2 L715.4 456.2 L734.6 452.1 L759.0 445.4 L789.3 441.1 L816.2 435.3 L839.7 431.3 L871.8 423.6 L897.0 418.5 L920.5 413.5 L945.0 407.8 L954.0 402.4 L970.0 398.4 L997.8 390.9 L1023.0 382.3 L1043.0 375.5 L1058.0 369.9 L1068.3 364.1 L1085.0 357.4 L1100.0 350.7 L1104.3 348.4 L1108.6 341.3 L1128.8 331.2 L1136.5 324.5 L1145.6 320.5 L1149.0 317.4 L1159.0 311.1 L1168.0 305.7 L1177.5 300.3" fill="none" stroke="#10b010" stroke-width="2.2" stroke-linejoin="round"/><path d="M582.8 477.4V484" stroke="#10b010" stroke-width="1.5"/><path d="M734.6 451.2V459.6" stroke="#10b010" stroke-width="1.5"/><path d="M789.3 440.2V446" stroke="#10b010" stroke-width="1.5"/><path d="M793 439.4V445" stroke="#10b010" stroke-width="1.5"/><path d="M871.8 422.7V426.5" stroke="#10b010" stroke-width="1.5"/><path d="M945 406.9V411.5" stroke="#10b010" stroke-width="1.5"/><path d="M951 403.3V409" stroke="#10b010" stroke-width="1.5"/><path d="M970 397.5V402.5" stroke="#10b010" stroke-width="1.5"/><path d="M1023 381.4V385" stroke="#10b010" stroke-width="1.5"/><path d="M1068.3 363.2V367" stroke="#10b010" stroke-width="1.5"/><path d="M1100 349.8V354" stroke="#10b010" stroke-width="1.5"/><path d="M1104.3 347.5V370.6" stroke="#10b010" stroke-width="1.5"/><path d="M1136.5 323.6V333" stroke="#10b010" stroke-width="1.5"/><path d="M1145.6 319.6V325" stroke="#10b010" stroke-width="1.5"/><path d="M1149 316.5V329.6" stroke="#10b010" stroke-width="1.5"/><path d="M235 509.3V512.5" stroke="#10b010" stroke-width="1.5"/><path d="M147.6 512.4V514.5" stroke="#10b010" stroke-width="1.5"/><path d="M626.4 470.4V473" stroke="#10b010" stroke-width="1.5"/><path d="M112 513.4V515.5" stroke="#10b010" stroke-width="1.5"/><path d="M329 501.0V503.5" stroke="#10b010" stroke-width="1.5"/><path d="M423 492.6V495" stroke="#10b010" stroke-width="1.5"/><path d="M655 465.7V468" stroke="#10b010" stroke-width="1.5"/><path d="M28.4 515.0 L60.0 514.4 L100.6 513.7 L147.6 512.4 L194.7 510.7 L235.0 509.3 L268.6 506.7 L298.8 504.6 L329.0 501.0 L359.3 498.3 L389.5 495.6 L423.0 492.6 L450.0 490.2 L473.6 487.5 L507.2 484.2 L540.8 481.5 L582.8 477.4 L611.3 473.7 L626.4 470.4 L655.0 465.7 L688.6 461.3 L715.4 455.3 L734.6 451.2 L759.0 444.5 L789.3 440.2 L816.2 434.4 L839.7 430.4 L871.8 422.7 L897.0 417.6 L920.5 412.6 L945.0 406.9 L954.0 401.5 L970.0 397.5 L997.8 390.0 L1023.0 381.4 L1043.0 374.6 L1058.0 369.0 L1068.3 363.2 L1085.0 356.5 L1100.0 349.8 L1104.3 347.5 L1108.6 340.4 L1128.8 330.3 L1136.5 323.6 L1145.6 319.6 L1149.0 316.5 L1159.0 310.2 L1168.0 304.8 L1177.5 299.4" fill="none" stroke="#101090" stroke-width="2.2" stroke-linejoin="round"/><path d="M1104.3 348V335.3M1149 317V312.8M734.6 451V447.5M1136.5 324V321" stroke="#101090" stroke-width="1.5"/><path d="M28 583.5L28.5 581.7L29.8 579.3L31.1 579.9L32.4 582.2L33.7 582.2L35.0 581.5L36.3 582.1L37.6 581.2L38.9 581.3L40.2 577.5L41.5 581.8L42.8 582.1L44.1 580.8L45.4 581.3L46.7 581.6L48.0 581.5L49.3 581.1L50.6 581.7L51.9 581.5L53.2 580.9L54.5 581.9L55.8 581.4L57.1 581.0L58.4 580.5L59.7 581.5L61.0 582.0L62.3 582.2L63.6 580.9L64.9 580.7L66.2 581.0L67.5 581.3L68.8 580.8L70.1 581.4L71.4 582.2L72.7 581.1L74.0 580.8L75.3 581.6L76.6 582.3L77.9 582.0L79.2 582.2L80.5 582.1L81.8 581.6L83.1 582.2L84.4 581.3L85.7 580.8L87.0 581.8L88.3 581.7L89.6 580.6L90.9 582.0L92.2 581.9L93.5 581.2L94.8 582.3L96.1 581.6L97.4 580.6L98.7 581.4L100.0 577.9L101.3 580.9L102.6 580.9L103.9 581.6L105.2 580.9L106.5 581.9L107.8 581.7L109.1 582.0L110.4 578.6L111.7 581.2L113.0 581.8L114.3 581.6L115.6 580.8L116.9 581.5L118.2 582.1L119.5 581.7L120.8 580.8L122.1 582.3L123.4 581.3L124.7 579.5L126.0 580.5L127.3 581.0L128.6 581.6L129.9 580.9L131.2 580.9L132.5 581.9L133.8 580.5L135.1 580.8L136.4 581.0L137.7 581.4L139.0 581.3L140.3 581.8L141.6 580.6L142.9 580.6L144.2 580.6L145.5 581.9L146.8 581.9L148.1 581.2L149.4 580.8L150.7 581.1L152.0 582.1L153.3 580.7L154.6 580.9L155.9 582.0L157.2 581.7L158.5 580.6L159.8 581.6L161.1 581.0L162.4 582.1L163.7 580.7L165.0 582.0L166.3 580.5L167.6 581.7L168.9 578.7L170.2 581.1L171.5 580.6L172.8 580.7L174.1 581.9L175.4 581.8L176.7 581.2L178.0 581.5L179.3 580.7L180.6 581.5L181.9 580.7L183.2 580.6L184.5 581.3L185.8 582.3L187.1 579.2L188.4 582.0L189.7 581.0L191.0 581.7L192.3 581.3L193.6 582.1L194.9 581.9L196.2 580.9L197.5 581.3L198.8 580.7L200.1 581.2L201.4 581.4L202.7 581.5L204.0 581.4L205.3 581.0L206.6 580.6L207.9 581.3L209.2 580.8L210.5 582.1L211.8 582.2L213.1 582.2L214.4 580.9L215.7 582.0L217.0 581.1L218.3 580.7L219.6 581.9L220.9 581.6L222.2 580.5L223.5 582.0L224.8 581.4L226.1 581.9L227.4 579.1L228.7 580.3L230.0 581.2L231.3 582.2L232.6 580.9L233.9 582.1L235.2 582.2L236.5 581.8L237.8 581.5L239.1 580.8L240.4 582.0L241.7 581.3L243.0 579.7L244.3 578.3L245.6 581.2L246.9 582.1L248.2 582.2L249.5 581.5L250.8 581.3L252.1 581.8L253.4 581.4L254.7 582.1L256.0 582.2L257.3 581.7L258.6 580.9L259.9 581.4L261.2 580.8L262.5 582.3L263.8 581.3L265.1 581.4L266.4 582.1L267.7 581.5L269.0 580.8L270.3 581.4L271.6 580.5L272.9 580.8L274.2 581.2L275.5 581.2L276.8 582.2L278.1 581.8L279.4 582.1L280.7 580.7L282.0 581.8L283.3 581.8L284.6 582.0L285.9 581.8L287.2 580.5L288.5 581.9L289.8 581.7L291.1 582.3L292.4 581.4L293.7 581.9L295.0 582.3L296.3 582.1L297.6 581.2L298.9 581.9L300.2 581.3L301.5 581.1L302.8 580.7L304.1 581.7L305.4 582.0L306.7 578.2L308.0 580.7L309.3 581.0L310.6 582.0L311.9 581.4L313.2 580.9L314.5 581.2L315.8 581.1L317.1 581.4L318.4 581.7L319.7 580.8L321.0 581.2L322.3 581.1L323.6 582.3L324.9 581.0L326.2 581.3L327.5 582.2L328.8 580.9L330.1 581.0L331.4 581.0L332.7 581.4L334.0 581.4L335.3 580.9L336.6 580.6L337.9 581.8L339.2 581.8L340.5 581.3L341.8 581.1L343.1 581.1L344.4 581.4L345.7 581.5L347.0 580.7L348.3 580.5L349.6 582.3L350.9 580.8L352.2 581.5L353.5 581.9L354.8 581.9L356.1 582.0L357.4 580.6L358.7 580.8L360.0 580.7L361.3 581.9L362.6 581.4L363.9 581.4L365.2 581.8L366.5 581.7L367.8 578.2L369.1 580.8L370.4 580.6L371.7 580.7L373.0 581.6L374.3 580.5L375.6 581.7L376.9 581.4L378.2 580.8L379.5 580.6L380.8 581.8L382.1 582.0L383.4 580.6L384.7 580.8L386.0 580.7L387.3 581.3L388.6 582.2L389.9 581.5L391.2 581.1L392.5 582.2L393.8 582.1L395.1 581.7L396.4 581.0L397.7 581.8L399.0 581.8L400.3 581.6L401.6 582.0L402.9 580.7L404.2 581.9L405.5 580.5L406.8 582.0L408.1 582.1L409.4 582.1L410.7 581.8L412.0 580.7L413.3 581.6L414.6 581.4L415.9 580.7L417.2 580.6L418.5 581.4L419.8 580.7L421.1 581.8L422.4 581.6L423.7 580.6L425.0 580.6L426.3 581.0L427.6 581.4L428.9 582.3L430.2 580.6L431.5 580.8L432.8 581.9L434.1 582.0L435.4 581.1L436.7 581.0L438.0 580.9L439.3 578.6L440.6 581.9L441.9 581.1L443.2 582.1L444.5 581.2L445.8 580.3L447.1 581.3L448.4 581.9L449.7 582.3L451.0 581.5L452.3 581.1L453.6 581.4L454.9 581.9L456.2 581.0L457.5 582.3L458.8 581.1L460.1 581.8L461.4 580.6L462.7 582.2L464.0 581.5L465.3 581.9L466.6 581.0L467.9 581.9L469.2 581.7L470.5 581.9L471.8 580.9L473.1 580.6L474.4 582.0L475.7 581.5L477.0 580.6L478.3 581.6L479.6 580.5L480.9 580.8L482.2 580.7L483.5 581.0L484.8 580.6L486.1 582.0L487.4 578.6L488.7 581.6L490.0 581.7L491.3 582.3L492.6 581.7L493.9 582.1L495.2 581.9L496.5 580.8L497.8 579.9L499.1 581.6L500.4 582.0L501.7 579.2L503.0 580.8L504.3 582.0L505.6 580.6L506.9 581.0L508.2 581.7L509.5 580.6L510.8 581.8L512.1 581.7L513.4 582.3L514.7 580.7L516.0 579.8L517.3 581.4L518.6 580.6L519.9 581.8L521.2 581.4L522.5 582.0L523.8 581.0L525.1 580.9L526.4 581.7L527.7 581.6L529.0 582.2L530.3 580.9L531.6 580.2L532.9 581.7L534.2 580.7L535.5 581.8L536.8 582.1L538.1 581.0L539.4 581.9L540.7 581.2L542.0 581.0L543.3 581.1L544.6 580.8L545.9 581.3L547.2 581.0L548.5 581.9L549.8 582.0L551.1 581.3L552.4 581.6L553.7 581.4L555.0 580.8L556.3 580.5L557.6 581.4L558.9 580.8L560.2 582.2L561.5 582.1L562.8 580.5L564.1 580.6L565.4 580.7L566.7 581.8L568.0 580.6L569.3 581.2L570.6 581.9L571.9 582.0L573.2 581.8L574.5 581.1L575.8 582.3L577.1 581.1L578.4 581.7L579.7 580.9L581.0 582.2L582.3 581.6L583.6 581.1L584.9 582.0L586.2 581.6L587.5 581.7L588.8 581.7L590.1 581.7L591.4 580.7L592.7 581.6L594.0 581.0L595.3 582.3L596.6 581.5L597.9 581.6L599.2 581.5L600.5 582.3L601.8 581.1L603.1 582.1L604.4 581.6L605.7 582.0L607.0 581.4L608.3 582.1L609.6 580.9L610.9 581.9L612.2 580.6L613.5 578.2L614.8 581.6L616.1 581.2L617.4 582.0L618.7 581.9L620.0 580.8L621.3 582.0L622.6 581.6L623.9 581.6L625.2 581.9L626.5 578.7L627.8 578.0L629.1 582.1L630.4 581.3L631.7 581.7L633.0 581.3L634.3 581.1L635.6 579.3L636.9 581.4L638.2 580.9L639.5 581.5L640.8 581.4L642.1 582.1L643.4 582.1L644.7 579.2L646.0 582.2L647.3 580.9L648.6 582.2L649.9 581.6L651.2 582.1L652.5 580.5L653.8 580.8L655.1 580.5L656.4 580.6L657.7 582.0L659.0 579.4L660.3 580.9L661.6 580.7L662.9 580.8L664.2 581.4L665.5 581.9L666.8 581.4L668.1 582.2L669.4 582.0L670.7 581.1L672.0 582.0L673.3 582.1L674.6 581.2L675.9 580.7L677.2 581.3L678.5 582.1L679.8 581.2L681.1 580.9L682.4 580.5L683.7 581.7L685.0 581.5L686.3 578.1L687.6 581.8L688.9 580.5L690.2 581.1L691.5 581.8L692.8 581.2L694.1 581.4L695.4 582.1L696.7 581.1L698.0 581.7L699.3 581.7L700.6 581.2L701.9 581.9L703.2 581.4L704.5 580.6L705.8 582.0L707.1 581.2L708.4 580.9L709.7 579.6L711.0 581.3L712.3 581.1L713.6 580.6L714.9 581.9L716.2 582.2L717.5 581.6L718.8 582.2L720.1 582.3L721.4 580.6L722.7 581.9L724.0 581.4L725.3 580.8L726.6 581.7L727.9 582.2L729.2 580.9L730.5 582.3L731.8 581.0L733.1 581.0L734.4 581.9L735.7 580.7L737.0 581.0L738.3 580.8L739.6 581.8L740.9 581.5L742.2 581.4L743.5 581.1L744.8 581.9L746.1 582.3L747.4 581.9L748.7 580.6L750.0 581.7L751.3 581.7L752.6 580.7L753.9 581.1L755.2 580.5L756.5 580.8L757.8 580.8L759.1 581.0L760.4 581.7L761.7 578.0L763.0 581.7L764.3 580.6L765.6 581.9L766.9 581.1L768.2 581.0L769.5 582.2L770.8 581.6L772.1 580.8L773.4 582.2L774.7 580.7L776.0 582.1L777.3 579.1L778.6 580.8L779.9 580.8L781.2 581.8L782.5 582.1L783.8 581.9L785.1 580.6L786.4 581.8L787.7 581.6L789.0 580.6L790.3 580.8L791.6 582.2L792.9 581.5L794.2 581.7L795.5 581.3L796.8 580.7L798.1 580.8L799.4 582.3L800.7 580.9L802.0 582.3L803.3 581.4L804.6 582.0L805.9 581.7L807.2 581.8L808.5 581.8L809.8 581.0L811.1 582.1L812.4 582.2L813.7 581.0L815.0 581.2L816.3 581.6L817.6 580.7L818.9 580.0L820.2 581.8L821.5 581.4L822.8 580.7L824.1 581.5L825.4 580.9L826.7 581.1L828.0 581.7L829.3 580.8L830.6 581.0L831.9 581.5L833.2 581.3L834.5 581.5L835.8 581.9L837.1 581.8L838.4 580.8L839.7 582.0L841.0 581.7L842.3 582.0L843.6 582.0L844.9 581.0L846.2 580.6L847.5 581.6L848.8 580.9L850.1 581.5L851.4 581.2L852.7 581.9L854.0 582.2L855.3 580.9L856.6 581.4L857.9 581.5L859.2 581.2L860.5 581.0L861.8 581.5L863.1 581.0L864.4 581.9L865.7 580.7L867.0 581.0L868.3 581.1L869.6 581.5L870.9 581.2L872.2 581.5L873.5 581.0L874.8 581.8L876.1 581.5L877.4 581.6L878.7 580.6L880.0 581.1L881.3 581.6L882.6 578.6L883.9 582.0L885.2 580.6L886.5 582.1L887.8 581.3L889.1 581.4L890.4 580.8L891.7 581.6L893.0 581.9L894.3 581.6L895.6 582.1L896.9 580.7L898.2 580.1L899.5 581.5L900.8 581.7L902.1 581.9L903.4 580.6L904.7 581.9L906.0 581.6L907.3 582.1L908.6 580.8L909.9 581.5L911.2 581.9L912.5 581.7L913.8 580.8L915.1 581.5L916.4 581.3L917.7 580.8L919.0 580.8L920.3 581.6L921.6 581.5L922.9 582.3L924.2 581.8L925.5 581.8L926.8 581.5L928.1 581.1L929.4 580.6L930.7 582.2L932.0 580.7L933.3 582.0L934.6 581.1L935.9 580.6L937.2 581.8L938.5 582.0L939.8 580.9L941.1 582.0L942.4 580.9L943.7 580.7L945.0 580.9L946.3 580.7L947.6 580.8L948.9 581.1L950.2 581.0L951.5 580.7L952.8 581.8L954.1 582.0L955.4 582.2L956.7 582.0L958.0 581.4L959.3 577.8L960.6 581.5L961.9 581.1L963.2 581.6L964.5 578.3L965.8 579.0L967.1 581.1L968.4 581.7L969.7 581.4L971.0 578.2L972.3 581.2L973.6 580.7L974.9 581.4L976.2 580.9L977.5 581.5L978.8 581.3L980.1 581.8L981.4 581.6L982.7 581.8L984.0 580.5L985.3 580.9L986.6 581.7L987.9 581.2L989.2 578.4L990.5 580.7L991.8 582.2L993.1 582.3L994.4 580.6L995.7 581.1L997.0 580.7L998.3 581.2L999.6 581.0L1000.9 581.1L1002.2 581.1L1003.5 580.9L1004.8 579.3L1006.1 580.7L1007.4 581.6L1008.7 580.9L1010.0 581.8L1011.3 581.5L1012.6 581.5L1013.9 578.6L1015.2 582.2L1016.5 580.8L1017.8 580.6L1019.1 582.3L1020.4 581.2L1021.7 580.5L1023.0 581.6L1024.3 581.1L1025.6 582.0L1026.9 581.1L1028.2 580.6L1029.5 580.7L1030.8 582.3L1032.1 581.9L1033.4 579.3L1034.7 581.0L1036.0 581.0L1037.3 581.2L1038.6 581.5L1039.9 581.8L1041.2 581.0L1042.5 581.1L1043.8 582.2L1045.1 581.0L1046.4 580.8L1047.7 582.2L1049.0 581.3L1050.3 581.1L1051.6 580.9L1052.9 581.1L1054.2 581.5L1055.5 580.9L1056.8 580.9L1058.1 578.4L1059.4 581.0L1060.7 581.7L1062.0 580.5L1063.3 581.2L1064.6 581.5L1065.9 581.6L1067.2 581.2L1068.5 580.8L1069.8 582.3L1071.1 581.5L1072.4 580.8L1073.7 582.2L1075.0 580.8L1076.3 581.3L1077.6 580.8L1078.9 581.1L1080.2 581.7L1081.5 581.3L1082.8 581.9L1084.1 580.6L1085.4 581.2L1086.7 581.5L1088.0 581.8L1089.3 580.9L1090.6 582.1L1091.9 580.9L1093.2 581.3L1094.5 580.7L1095.8 581.4L1097.1 582.0L1098.4 582.0L1099.7 581.6L1101.0 581.6L1102.3 578.5L1103.6 581.6L1104.9 581.2L1106.2 582.0L1107.5 581.7L1108.8 578.8L1110.1 580.7L1111.4 581.3L1112.7 580.9L1114.0 580.6L1115.3 580.8L1116.6 581.1L1117.9 582.0L1119.2 582.2L1120.5 580.7L1121.8 580.6L1123.1 582.2L1124.4 581.6L1125.7 580.6L1127.0 581.3L1128.3 580.6L1129.6 581.6L1130.9 582.0L1132.2 580.5L1133.5 582.2L1134.8 581.7L1136.1 580.7L1137.4 582.2L1138.7 581.0L1140.0 580.0L1141.3 580.9L1142.6 581.1L1143.9 581.2L1145.2 582.1L1146.5 581.8L1147.8 581.4L1149.1 581.9L1150.4 578.6L1151.7 578.7L1153.0 581.9L1154.3 580.7L1155.6 582.0L1156.9 582.1L1158.2 580.8L1159.5 581.5L1160.8 580.8L1162.1 581.2L1163.4 579.4L1164.7 581.3L1166.0 580.7L1167.3 581.6L1168.6 581.8L1169.9 581.7L1171.2 581.4L1172.5 580.7L1173.8 577.4L1175.1 581.1L1176.4 581.4L1177.5 583.5Z" fill="#10b010" stroke="#10b010" stroke-width="0.6"/><path d="M73 583.5V569.7" stroke="#10b010" stroke-width="1.7"/><path d="M112.4 583.5V570.4" stroke="#10b010" stroke-width="1.7"/><path d="M147.6 583.5V565.3" stroke="#10b010" stroke-width="1.7"/><path d="M156.7 583.5V566.4" stroke="#10b010" stroke-width="1.7"/><path d="M232.6 583.5V550.2" stroke="#10b010" stroke-width="1.7"/><path d="M269.6 583.5V575.4" stroke="#10b010" stroke-width="1.7"/><path d="M287.4 583.5V574.8" stroke="#10b010" stroke-width="1.7"/><path d="M582.4 583.5V553.6" stroke="#10b010" stroke-width="1.7"/><path d="M734.6 583.5V556.3" stroke="#10b010" stroke-width="1.7"/><path d="M945 583.5V575.4" stroke="#10b010" stroke-width="1.7"/><path d="M951 583.5V577" stroke="#10b010" stroke-width="1.7"/><path d="M1104.6 583.5V568" stroke="#10b010" stroke-width="1.7"/><path d="M1145 583.5V575" stroke="#10b010" stroke-width="1.7"/><path d="M1149 583.5V556.3" stroke="#10b010" stroke-width="1.7"/><path d="M1100 583.5V577" stroke="#10b010" stroke-width="1.7"/><path d="M175 583.5V577" stroke="#10b010" stroke-width="1.7"/><path d="M183 583.5V577.5" stroke="#10b010" stroke-width="1.7"/><path d="M366 583.5V577" stroke="#10b010" stroke-width="1.7"/><path d="M870 583.5V578" stroke="#10b010" stroke-width="1.7"/><path d="M1023 583.5V577.5" stroke="#10b010" stroke-width="1.7"/><rect x="28" y="296" width="1203" height="229.5" fill="none" stroke="#3c3c3c" stroke-width="1.3"/><rect x="28" y="527.8" width="1203" height="55.700000000000045" fill="none" stroke="#3c3c3c" stroke-width="1.3"/></svg>
<div class="a t" style="left:32px;top:298.5px;font-size:8px;line-height:12px;color:#2828d0;font-weight:700;letter-spacing:-0.25px;">结余</div>
<div class="a t" style="left:50px;top:297.3px;font-size:10px;line-height:14px;color:#555;">/</div>
<div class="a t" style="left:57px;top:298.5px;font-size:8px;line-height:12px;color:#18c018;font-weight:700;letter-spacing:0.00px;">净值</div>
<div class="a t" style="left:31px;top:530.1px;font-size:7.5px;line-height:11.5px;color:#333;letter-spacing:0.75px;">入金加载</div>
<div class="a t" style="left:1236.5px;top:312.4px;font-size:10px;line-height:14px;color:#222;transform:scaleX(0.818);transform-origin:left center;">294546</div>
<div class="a t" style="left:1236.5px;top:341.7px;font-size:10px;line-height:14px;color:#222;transform:scaleX(0.818);transform-origin:left center;">251856</div>
<div class="a t" style="left:1236.5px;top:371.2px;font-size:10px;line-height:14px;color:#222;transform:scaleX(0.818);transform-origin:left center;">209166</div>
<div class="a t" style="left:1236.5px;top:400.9px;font-size:10px;line-height:14px;color:#222;transform:scaleX(0.818);transform-origin:left center;">166475</div>
<div class="a t" style="left:1236.5px;top:430.5px;font-size:10px;line-height:14px;color:#222;transform:scaleX(0.818);transform-origin:left center;">123785</div>
<div class="a t" style="left:1236.5px;top:459.9px;font-size:10px;line-height:14px;color:#222;transform:scaleX(0.818);transform-origin:left center;">81095</div>
<div class="a t" style="left:1236.5px;top:489.5px;font-size:10px;line-height:14px;color:#222;transform:scaleX(0.818);transform-origin:left center;">38405</div>
<div class="a" style="left:1234px;top:520px;width:38px;height:5.5px;overflow:hidden;">
<div class="a t" style="left:2.5px;top:-0.9px;font-size:10px;line-height:14px;color:#222;transform:scaleX(0.880);transform-origin:left center;">-4285</div>
</div>
<div class="a t" style="left:1236.5px;top:527.3px;font-size:10px;line-height:14px;color:#222;transform:scaleX(0.899);transform-origin:left center;">100.0%</div>
<div class="a t" style="left:1236.5px;top:576.9px;font-size:10px;line-height:14px;color:#222;transform:scaleX(0.899);transform-origin:left center;">0.0%</div>
<div class="a t" style="left:30.8px;top:582.9px;font-size:9.5px;line-height:13.5px;color:#222;font-weight:700;transform:scaleX(0.894);transform-origin:left center;">2025.10.01</div>
<div class="a t" style="left:90.1px;top:582.9px;font-size:9.5px;line-height:13.5px;color:#222;font-weight:700;transform:scaleX(0.894);transform-origin:left center;">2025.10.07</div>
<div class="a t" style="left:149.4px;top:582.9px;font-size:9.5px;line-height:13.5px;color:#222;font-weight:700;transform:scaleX(0.894);transform-origin:left center;">2025.10.10</div>
<div class="a t" style="left:208.7px;top:582.9px;font-size:9.5px;line-height:13.5px;color:#222;font-weight:700;transform:scaleX(0.894);transform-origin:left center;">2025.10.15</div>
<div class="a t" style="left:268.0px;top:582.9px;font-size:9.5px;line-height:13.5px;color:#222;font-weight:700;transform:scaleX(0.894);transform-origin:left center;">2025.10.20</div>
<div class="a t" style="left:327.3px;top:582.9px;font-size:9.5px;line-height:13.5px;color:#222;font-weight:700;transform:scaleX(0.894);transform-origin:left center;">2025.10.22</div>
<div class="a t" style="left:386.59999999999997px;top:582.9px;font-size:9.5px;line-height:13.5px;color:#222;font-weight:700;transform:scaleX(0.894);transform-origin:left center;">2025.10.28</div>
<div class="a t" style="left:445.9px;top:582.9px;font-size:9.5px;line-height:13.5px;color:#222;font-weight:700;transform:scaleX(0.894);transform-origin:left center;">2025.10.30</div>
<div class="a t" style="left:505.2px;top:582.9px;font-size:9.5px;line-height:13.5px;color:#222;font-weight:700;transform:scaleX(0.904);transform-origin:left center;">2025.11.05</div>
<div class="a t" style="left:564.4999999999999px;top:582.9px;font-size:9.5px;line-height:13.5px;color:#222;font-weight:700;transform:scaleX(0.914);transform-origin:left center;">2025.11.11</div>
<div class="a t" style="left:623.8px;top:582.9px;font-size:9.5px;line-height:13.5px;color:#222;font-weight:700;transform:scaleX(0.904);transform-origin:left center;">2025.11.17</div>
<div class="a t" style="left:683.0999999999999px;top:582.9px;font-size:9.5px;line-height:13.5px;color:#222;font-weight:700;transform:scaleX(0.904);transform-origin:left center;">2025.11.20</div>
<div class="a t" style="left:742.3999999999999px;top:582.9px;font-size:9.5px;line-height:13.5px;color:#222;font-weight:700;transform:scaleX(0.904);transform-origin:left center;">2025.11.25</div>
<div class="a t" style="left:801.6999999999999px;top:582.9px;font-size:9.5px;line-height:13.5px;color:#222;font-weight:700;transform:scaleX(0.894);transform-origin:left center;">2025.12.01</div>
<div class="a t" style="left:860.9999999999999px;top:582.9px;font-size:9.5px;line-height:13.5px;color:#222;font-weight:700;transform:scaleX(0.894);transform-origin:left center;">2025.12.05</div>
<div class="a t" style="left:920.3px;top:582.9px;font-size:9.5px;line-height:13.5px;color:#222;font-weight:700;transform:scaleX(0.904);transform-origin:left center;">2025.12.11</div>
<div class="a t" style="left:979.5999999999999px;top:582.9px;font-size:9.5px;line-height:13.5px;color:#222;font-weight:700;transform:scaleX(0.894);transform-origin:left center;">2025.12.16</div>
<div class="a t" style="left:1038.8999999999999px;top:582.9px;font-size:9.5px;line-height:13.5px;color:#222;font-weight:700;transform:scaleX(0.894);transform-origin:left center;">2025.12.22</div>
<div class="a t" style="left:1098.1999999999998px;top:582.9px;font-size:9.5px;line-height:13.5px;color:#222;font-weight:700;transform:scaleX(0.894);transform-origin:left center;">2025.12.29</div>
<div class="a" style="left:22px;top:597.5px;width:1250px;height:1.3px;background:#4a4a4a;"></div>
<div class="a" style="left:22px;top:598.8px;width:1250px;height:22.2px;background:#f0f0f0;"></div>
<div class="a" style="left:151px;top:597px;width:41.5px;height:22px;background:#ffffff;box-sizing:border-box;border-left:1.4px solid #333;border-right:1.8px solid #333;border-bottom:1.8px solid #333;"></div>
<div class="a t" style="left:38px;top:601.8px;font-size:11.5px;line-height:15.5px;color:#8c8c8c;letter-spacing:-0.50px;">概览</div>
<div class="a t" style="left:79px;top:601.8px;font-size:11.5px;line-height:15.5px;color:#8c8c8c;letter-spacing:-0.50px;">设置</div>
<div class="a t" style="left:119.5px;top:601.8px;font-size:11.5px;line-height:15.5px;color:#8c8c8c;letter-spacing:-0.50px;">输入</div>
<div class="a t" style="left:160px;top:601.8px;font-size:11.5px;line-height:15.5px;color:#1a1a1a;letter-spacing:0.00px;">图表</div>
<div class="a t" style="left:201px;top:601.8px;font-size:11.5px;line-height:15.5px;color:#8c8c8c;letter-spacing:-0.50px;">代理</div>
<div class="a t" style="left:242px;top:601.8px;font-size:11.5px;line-height:15.5px;color:#8c8c8c;letter-spacing:-0.50px;">日志</div>
<div class="a" style="left:69.5px;top:601.5px;width:1px;height:15px;background:#9a9a9a;"></div>
<div class="a" style="left:110.5px;top:601.5px;width:1px;height:15px;background:#9a9a9a;"></div>
<div class="a" style="left:233px;top:601.5px;width:1px;height:15px;background:#9a9a9a;"></div>
<div class="a" style="left:282px;top:600.5px;width:734px;height:19.5px;background:linear-gradient(90deg,#d9f0cf 0%,#b5e59c 40%,#93dc68 75%,#7fd848 100%);"></div>
<div class="a t" style="left:1092px;top:603.6px;font-size:12px;line-height:16px;color:#222;letter-spacing:-0.15px;">00:26:17 / 00:32:34</div>
<div class="a" style="left:1203px;top:601.5px;width:69px;height:18.5px;background:#f08c8c;box-sizing:border-box;border:1px solid #e8a0a0;"></div>
<div class="a t" style="left:1225.5px;top:603.8px;font-size:11.5px;line-height:15.5px;color:#3a2020;letter-spacing:0.00px;">取消</div>
<div class="a" style="left:8px;top:621px;width:1264px;height:6.5px;background:#f0f0f0;"></div>
<div class="a" style="left:8px;top:627.5px;width:14px;height:275.5px;background:#c3d2e2;"></div>
<div class="a" style="left:22px;top:627.5px;width:1250px;height:255px;background:#ffffff;"></div>
<div class="a" style="left:22px;top:627.3px;width:1250px;height:1px;background:#d0d0d0;"></div>
<svg class="a" style="left:11.5px;top:634.5px;" width="8" height="8" viewBox="0 0 8 8"><path d="M0.6 0.6L7.4 7.4M7.4 0.6L0.6 7.4" stroke="#1a1a1a" stroke-width="1.6"/></svg>
<div class="a t" style="left:15px;top:884px;width:0;height:0;"><div class="a t" style="left:-40px;top:-8px;width:80px;height:16px;line-height:16px;font-size:12px;color:#33414f;text-align:center;transform:rotate(-90deg);">工具箱</div></div>
<div class="a t" style="left:30px;top:632.1px;font-size:11.5px;line-height:15.5px;color:#333;letter-spacing:-0.38px;">交易品种</div>
<div class="a t" style="left:122px;top:632.1px;font-size:11.5px;line-height:15.5px;color:#333;letter-spacing:-0.17px;">订单号</div>
<div class="a t" style="right:970.5px;top:632.1px;font-size:11.5px;line-height:15.5px;color:#333;">时间</div>
<div class="a t" style="right:786.5px;top:632.1px;font-size:11.5px;line-height:15.5px;color:#333;">交易量</div>
<div class="a t" style="right:665px;top:632.1px;font-size:11.5px;line-height:15.5px;color:#333;">价位</div>
<div class="a t" style="right:544px;top:632.1px;font-size:11.5px;line-height:15.5px;color:#333;">止损</div>
<div class="a t" style="right:422.5px;top:632.1px;font-size:11.5px;line-height:15.5px;color:#333;">止盈</div>
<div class="a t" style="right:300.5px;top:632.1px;font-size:11.5px;line-height:15.5px;color:#333;">价位</div>
<div class="a t" style="right:107.5px;top:632.1px;font-size:11.5px;line-height:15.5px;color:#333;">盈利</div>
<div class="a t" style="left:329px;top:632.1px;font-size:11.5px;line-height:15.5px;color:#333;letter-spacing:-0.25px;">类型</div>
<svg class="a" style="left:360.5px;top:637px;" width="6" height="4" viewBox="0 0 6 4"><path d="M0 3.6L3 0.2L6 3.6Z" fill="#222"/></svg>
<div class="a" style="left:116px;top:629px;width:1px;height:21.5px;background:#d4d4d4;"></div>
<div class="a" style="left:194px;top:629px;width:1px;height:21.5px;background:#d4d4d4;"></div>
<div class="a" style="left:314.5px;top:629px;width:1px;height:21.5px;background:#d4d4d4;"></div>
<div class="a" style="left:377px;top:629px;width:1px;height:21.5px;background:#d4d4d4;"></div>
<div class="a" style="left:498.3px;top:629px;width:1px;height:21.5px;background:#d4d4d4;"></div>
<div class="a" style="left:620.2px;top:629px;width:1px;height:21.5px;background:#d4d4d4;"></div>
<div class="a" style="left:741.5px;top:629px;width:1px;height:21.5px;background:#d4d4d4;"></div>
<div class="a" style="left:862.8px;top:629px;width:1px;height:21.5px;background:#d4d4d4;"></div>
<div class="a" style="left:984.4px;top:629px;width:1px;height:21.5px;background:#d4d4d4;"></div>
<div class="a" style="left:22px;top:650.5px;width:1158px;height:1px;background:#e6e6e6;"></div>
<div class="a" style="left:24px;top:651.8px;width:1154.5px;height:17.6px;background:#c9c9c9;"></div>
<div class="a t" style="left:30.5px;top:654.7px;font-size:9px;line-height:13px;color:#111;">•</div>
<div class="a t" style="left:44px;top:653.5px;font-size:11.5px;line-height:15.5px;color:#111;font-weight:700;letter-spacing:-0.01px;">结余: 20 975.85 USD  净值: 20 975.85  可用预付款: 20 975.85</div>
<div class="a t" style="right:104.5px;top:653.5px;font-size:11.5px;line-height:15.5px;color:#111;font-weight:700;">0.00</div>
<div class="a" style="left:22px;top:882.3px;width:1250px;height:1.4px;background:#333;"></div>
<div class="a" style="left:22px;top:883.7px;width:1250px;height:23.3px;background:#f0f0f0;"></div>
<div class="a" style="left:29.3px;top:882px;width:41px;height:21.3px;background:#ffffff;box-sizing:border-box;border-left:1.4px solid #333;border-right:1.8px solid #333;border-bottom:1.8px solid #333;"></div>
<div class="a t" style="left:38px;top:885.4px;font-size:11.5px;line-height:15.5px;color:#1a1a1a;letter-spacing:-0.25px;">交易</div>
<div class="a t" style="left:79px;top:885.4px;font-size:11.5px;line-height:15.5px;color:#8c8c8c;letter-spacing:-0.25px;">敞口</div>
<div class="a t" style="left:119.5px;top:885.4px;font-size:11.5px;line-height:15.5px;color:#8c8c8c;letter-spacing:-0.25px;">历史</div>
<div class="a t" style="left:160px;top:885.4px;font-size:11.5px;line-height:15.5px;color:#8c8c8c;letter-spacing:-0.25px;">新闻</div>
<div class="a t" style="left:218px;top:885.4px;font-size:11.5px;line-height:15.5px;color:#8c8c8c;letter-spacing:-0.25px;">邮箱</div>
<div class="a t" style="left:275px;top:885.4px;font-size:11.5px;line-height:15.5px;color:#8c8c8c;letter-spacing:-0.12px;">经济日历</div>
<div class="a t" style="left:338px;top:885.4px;font-size:11.5px;line-height:15.5px;color:#8c8c8c;letter-spacing:0.00px;">公司</div>
<div class="a t" style="left:379px;top:885.4px;font-size:11.5px;line-height:15.5px;color:#8c8c8c;letter-spacing:-0.25px;">预警</div>
<div class="a t" style="left:419.5px;top:885.4px;font-size:11.5px;line-height:15.5px;color:#8c8c8c;letter-spacing:-0.25px;">文章</div>
<div class="a t" style="left:461px;top:885.4px;font-size:11.5px;line-height:15.5px;color:#8c8c8c;letter-spacing:-0.33px;">代码库</div>
<div class="a t" style="left:513px;top:885.4px;font-size:11.5px;line-height:15.5px;color:#8c8c8c;letter-spacing:-0.25px;">专家</div>
<div class="a t" style="left:554px;top:885.4px;font-size:11.5px;line-height:15.5px;color:#8c8c8c;letter-spacing:-0.25px;">日志</div>
<div class="a" style="left:110.3px;top:885.5px;width:1px;height:15px;background:#9a9a9a;"></div>
<div class="a" style="left:151.3px;top:885.5px;width:1px;height:15px;background:#9a9a9a;"></div>
<div class="a" style="left:209px;top:885.5px;width:1px;height:15px;background:#9a9a9a;"></div>
<div class="a" style="left:266.3px;top:885.5px;width:1px;height:15px;background:#9a9a9a;"></div>
<div class="a" style="left:329px;top:885.5px;width:1px;height:15px;background:#9a9a9a;"></div>
<div class="a" style="left:370px;top:885.5px;width:1px;height:15px;background:#9a9a9a;"></div>
<div class="a" style="left:410.5px;top:885.5px;width:1px;height:15px;background:#9a9a9a;"></div>
<div class="a" style="left:452px;top:885.5px;width:1px;height:15px;background:#9a9a9a;"></div>
<div class="a" style="left:504px;top:885.5px;width:1px;height:15px;background:#9a9a9a;"></div>
<div class="a" style="left:545px;top:885.5px;width:1px;height:15px;background:#9a9a9a;"></div>
<div class="a t" style="left:184px;top:890.2px;font-size:8.5px;line-height:12.5px;color:#e03030;font-weight:700;transform:scaleX(1.215);transform-origin:left center;">99</div>
<div class="a t" style="left:242px;top:890.2px;font-size:8.5px;line-height:12.5px;color:#e03030;font-weight:700;transform:scaleX(1.215);transform-origin:left center;">10</div>
<svg class="a" style="left:1124px;top:884.5px;" width="11" height="14" viewBox="0 0 11 14"><path d="M3.3 4.2V2.8Q3.3 0.9 5.5 0.9T7.7 2.8V4.2" fill="none" stroke="#e8b800" stroke-width="1.1"/><path d="M1.4 3.9H9.6L10.6 13H0.4Z" fill="#f7c600" stroke="#eab900" stroke-width="0.7" stroke-linejoin="round"/></svg>
<div class="a t" style="left:1140px;top:885.4px;font-size:11.5px;line-height:15.5px;color:#1a1a1a;letter-spacing:-0.25px;">市场</div>
<svg class="a" style="left:1173.5px;top:887.5px;" width="14" height="10" viewBox="0 0 14 10"><g fill="none" stroke="#c4c4c4" stroke-width="1.1"><circle cx="7" cy="5" r="1.3"/><path d="M4.4 2.5Q3.2 5 4.4 7.5M9.6 2.5Q10.8 5 9.6 7.5M2.2 0.9Q0 5 2.2 9.1M11.8 0.9Q14 5 11.8 9.1"/></g></svg>
<div class="a t" style="left:1192px;top:885.4px;font-size:11.5px;line-height:15.5px;color:#b4b4b4;letter-spacing:-0.25px;">信号</div>
<svg class="a" style="left:1225px;top:885.5px;" width="15" height="13" viewBox="0 0 15 13"><g fill="none" stroke="#c4c4c4" stroke-width="1.1"><path d="M3.8 8.4Q0.8 8.4 0.8 6Q0.8 3.8 3.2 3.6Q4 0.8 7.3 0.8Q10.4 0.8 11.2 3.5Q14.2 3.6 14.2 6.1Q14.2 8.4 11.4 8.4Z"/><path d="M7.5 8.4V11.2M1.8 11.4H13.2"/></g></svg>
<div class="a t" style="left:1243.5px;top:885.4px;font-size:11.5px;line-height:15.5px;color:#b4b4b4;transform:scaleX(0.869);transform-origin:left center;">VPS</div>
<div class="a" style="left:8px;top:907px;width:1264px;height:1px;background:#a8a8a8;"></div>
<div class="a" style="left:8px;top:908px;width:1264px;height:19px;background:#f0f0f0;"></div>
<div class="a t" style="left:9.5px;top:911.4px;font-size:11.5px;line-height:15.5px;color:#1a1a1a;letter-spacing:-0.48px;">查看帮忙,请按 F1</div>
<div class="a t" style="left:606px;top:911.4px;font-size:11.5px;line-height:15.5px;color:#1a1a1a;letter-spacing:0.29px;">Default</div>
<div class="a" style="left:600.3px;top:909.5px;width:1px;height:16px;background:#a8a8a8;"></div>
<div class="a" style="left:674.6px;top:909.5px;width:1px;height:16px;background:#a8a8a8;"></div>
<div class="a" style="left:779.4px;top:909.5px;width:1px;height:16px;background:#a8a8a8;"></div>
<div class="a" style="left:855px;top:909.5px;width:1px;height:16px;background:#a8a8a8;"></div>
<div class="a" style="left:930.6px;top:909.5px;width:1px;height:16px;background:#a8a8a8;"></div>
<div class="a" style="left:1002.8px;top:909.5px;width:1px;height:16px;background:#a8a8a8;"></div>
<div class="a" style="left:1077.4px;top:909.5px;width:1px;height:16px;background:#a8a8a8;"></div>
<div class="a" style="left:1149px;top:909.5px;width:1px;height:16px;background:#a8a8a8;"></div>
<svg class="a" style="left:1154px;top:912px;" width="15" height="11" viewBox="0 0 15 11"><path d="M1.2 10.5V8.3M4.2 10.5V6.5M7.2 10.5V4.5M10.2 10.5V2.5M13.2 10.5V0.5" stroke="#34b034" stroke-width="1.7"/></svg>
<div class="a t" style="left:1173px;top:911.4px;font-size:11.5px;line-height:15.5px;color:#1a1a1a;letter-spacing:0.41px;">21.6 / 8.0 Mb</div>
<svg class="a" style="left:1259px;top:915px;" width="10" height="10" viewBox="0 0 10 10"><g fill="#c0c0c0"><rect x="7" y="1" width="1.6" height="1.6"/><rect x="4" y="4" width="1.6" height="1.6"/><rect x="7" y="4" width="1.6" height="1.6"/><rect x="1" y="7" width="1.6" height="1.6"/><rect x="4" y="7" width="1.6" height="1.6"/><rect x="7" y="7" width="1.6" height="1.6"/></g></svg>
</body></html>
